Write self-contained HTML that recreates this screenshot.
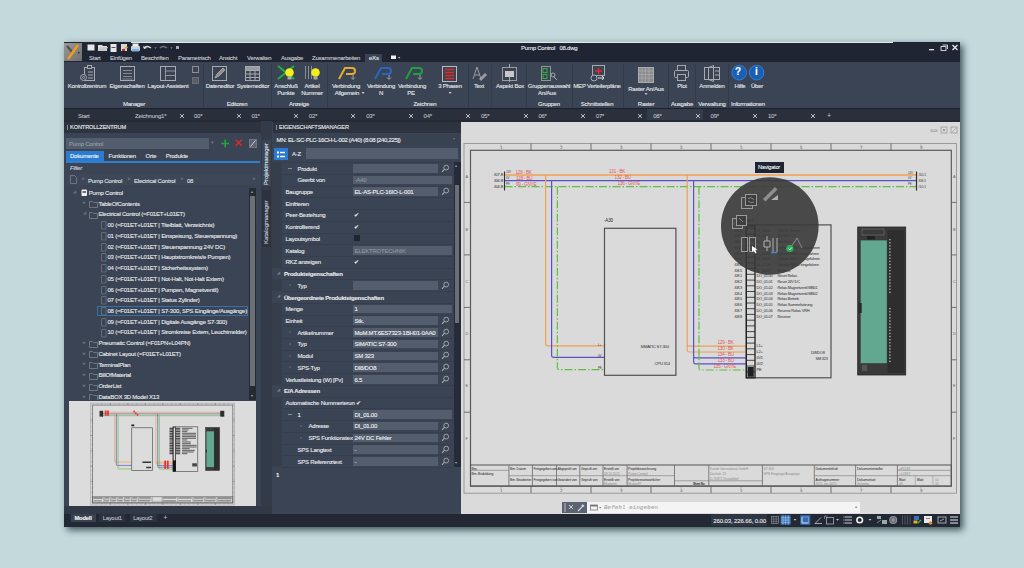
<!DOCTYPE html>
<html><head><meta charset="utf-8">
<style>
*{box-sizing:border-box}
html,body{margin:0;padding:0}
body{width:1024px;height:568px;background:#c4d9dc;position:relative;overflow:hidden;font-family:"Liberation Sans",sans-serif;color:#e3e6ea;font-size:6px;letter-spacing:-0.22px}
.a{position:absolute}
.t{position:absolute;white-space:nowrap;line-height:1;-webkit-text-stroke:0.12px currentColor}
.c{position:absolute;white-space:nowrap;line-height:1;text-align:center;width:80px;-webkit-text-stroke:0.12px currentColor}
svg{position:absolute;overflow:visible}
</style></head><body>
<div class="a" style="left:64px;top:42px;width:896px;height:484.5px;box-shadow:3px 3px 7px rgba(10,30,35,0.72);background:#3b4454"></div>
<div class="a" style="left:64px;top:42px;width:896px;height:20px;background:#1f2532"></div>
<div class="a" style="left:64px;top:62px;width:896px;height:46px;background:#3b4454"></div>
<div class="a" style="left:64px;top:108px;width:896px;height:13px;background:#29303c"></div>
<div class="a" style="left:64px;top:121px;width:197px;height:393px;background:#3b4454"></div>
<div class="a" style="left:261px;top:121px;width:11px;height:393px;background:#343c4a"></div>
<div class="a" style="left:272px;top:121px;width:189px;height:393px;background:#3b4454"></div>
<div class="a" style="left:461px;top:121px;width:499px;height:393px;background:#dadada"></div>
<div class="a" style="left:64px;top:514px;width:896px;height:12.5px;background:#232a36"></div>

<!-- logo -->
<div class="a" style="left:64px;top:43px;width:18px;height:18px;background:linear-gradient(135deg,#9a9a9a,#6e6e6e)"></div>
<svg style="left:64px;top:43px" width="18" height="18"><path d="M3 3 L9 10" stroke="#505050" stroke-width="2.2"/><path d="M14 2 L4 16" stroke="#f39a1e" stroke-width="2.6"/><rect x="14" y="9" width="1.5" height="1.5" fill="#333"/></svg>
<!-- quick access -->
<svg style="left:86px;top:43px" width="100" height="10">
<rect x="1.5" y="1.5" width="7" height="6" fill="#e8e8e8"/>
<path d="M12 2 h4 l1 1 h4 v5 h-9z" fill="#e0e0e0"/><path d="M14 4 h8 l-2 4 h-8z" fill="#c8c8c8"/>
<rect x="24.5" y="1" width="6" height="8" fill="#e8e8e8"/><rect x="25.5" y="4" width="4" height="1" fill="#555"/>
<rect x="35" y="1" width="6" height="7" fill="#d8d8d8"/><path d="M37 6 l4 -3 l1 2 z" fill="#e0a020"/><rect x="36" y="6" width="3" height="2" fill="#c03030"/>
<rect x="45" y="3" width="9" height="5" rx="1" fill="#c8d4e0"/><rect x="46.5" y="0.5" width="6" height="3" fill="#eee"/><rect x="46" y="6" width="7" height="2.5" fill="#7fb0e0"/>
<path d="M58 5 q3 -3 7 0" stroke="#ddd" stroke-width="1.4" fill="none"/><path d="M57 3 l1 3 l3 -1z" fill="#ddd"/>
<path d="M68.5 4.5 l2 0 l-1 1.2z" fill="#aaa"/>
<path d="M74 5 q3 -3 7 0" stroke="#777" stroke-width="1.4" fill="none"/>
<path d="M84.5 4.5 l2 0 l-1 1.2z" fill="#aaa"/>
<rect x="90" y="3" width="3" height="3" fill="#aaa"/>
</svg>
<div class="t" style="left:521px;top:45px;font-size:6px;color:#e8eaee">Pump Control&nbsp;&nbsp;&nbsp;08.dwg</div>
<!-- window controls -->
<svg style="left:925px;top:43px" width="35" height="12">
<rect x="4" y="6" width="5" height="1.3" fill="#e6e6e6"/>
<rect x="16" y="3.5" width="5" height="4" fill="none" stroke="#ddd" stroke-width="0.9"/><path d="M17.5 2 h5 v4" fill="none" stroke="#ddd" stroke-width="0.9"/>
<path d="M27.5 2 l5 5 M32.5 2 l-5 5" stroke="#eee" stroke-width="1.2"/>
</svg>
<!-- menu tabs -->
<div class="t" style="left:89px;top:55px;color:#c9ccd2">Start</div>
<div class="t" style="left:110px;top:55px;color:#c9ccd2">Einfügen</div>
<div class="t" style="left:141px;top:55px;color:#c9ccd2">Beschriften</div>
<div class="t" style="left:178px;top:55px;color:#c9ccd2">Parametrisch</div>
<div class="t" style="left:219px;top:55px;color:#c9ccd2">Ansicht</div>
<div class="t" style="left:247px;top:55px;color:#c9ccd2">Verwalten</div>
<div class="t" style="left:281px;top:55px;color:#c9ccd2">Ausgabe</div>
<div class="t" style="left:312px;top:55px;color:#c9ccd2">Zusammenarbeiten</div>
<div class="a" style="left:365px;top:54px;width:17px;height:8px;background:#3b4454"></div>
<div class="t" style="left:369px;top:55px;color:#e6e8ea">eXs</div>
<svg style="left:390px;top:54px" width="12" height="8"><rect x="1" y="1.5" width="5" height="3.5" fill="#f0f0f0"/><path d="M8 3 h2.4 l-1.2 1.4z" fill="#ccc"/></svg>
<div class="a" style="left:131px;top:40.5px;width:762px;height:1.5px;background:linear-gradient(#c0d4d6,#a9bfbf)"></div>
<div class="a" style="left:131px;top:42px;width:762px;height:1px;background:#e4e8ea"></div>

<!-- separators -->
<div class="a" style="left:203px;top:64px;width:1px;height:44px;background:#333b48"></div>
<div class="a" style="left:271px;top:64px;width:1px;height:44px;background:#333b48"></div>
<div class="a" style="left:327px;top:64px;width:1px;height:44px;background:#333b48"></div>
<div class="a" style="left:468px;top:64px;width:1px;height:44px;background:#333b48"></div>
<div class="a" style="left:491px;top:64px;width:1px;height:44px;background:#353d4a"></div>
<div class="a" style="left:526px;top:64px;width:1px;height:44px;background:#333b48"></div>
<div class="a" style="left:572px;top:64px;width:1px;height:44px;background:#333b48"></div>
<div class="a" style="left:623px;top:64px;width:1px;height:44px;background:#333b48"></div>
<div class="a" style="left:668px;top:64px;width:1px;height:44px;background:#333b48"></div>
<div class="a" style="left:695px;top:64px;width:1px;height:44px;background:#333b48"></div>
<div class="a" style="left:728px;top:64px;width:1px;height:44px;background:#333b48"></div>
<!-- icons -->
<svg style="left:64px;top:62px" width="900" height="24" fill="none" stroke="#a6a9ae" stroke-width="1">
<!-- Kontrollzentrum -->
<rect x="20.5" y="5.5" width="10" height="13"/><rect x="23.5" y="3.5" width="4" height="3" fill="#3b4454"/><path d="M24 10h5M24 13h5M24 16h5"/><circle cx="19.5" cy="15.5" r="3" fill="#3b4454"/><circle cx="19.5" cy="15.5" r="1"/>
<!-- Eigenschaften -->
<rect x="56.5" y="4.5" width="14" height="14"/><path d="M59 8.5h9M59 11.5h9M59 14.5h9" stroke-width="0.7"/><path d="M58.5 17h10" stroke-width="0.6"/>
<!-- Layout-Assistent -->
<rect x="96.5" y="4.5" width="15" height="14"/><path d="M101.5 4.5v14M101.5 9h10M101.5 13.5h10" stroke-width="0.8"/>
<!-- small -->
<rect x="128.5" y="4.5" width="6" height="6" stroke="#8a8e94"/><rect x="128.5" y="15.5" width="6" height="6" stroke="#6a6e74" fill="#5a5e64"/>
<!-- Dateneditor -->
<rect x="148.5" y="4.5" width="14" height="14"/><path d="M151 16l2 -4 l6 -6 l2 2 l-6 6z" fill="#8e9096" stroke="#a0a2a6"/>
<!-- Systemeditor -->
<rect x="181.5" y="4.5" width="14" height="14"/><rect x="181.5" y="4.5" width="14" height="4" fill="#9a9ca0"/><path d="M181.5 12h14M181.5 15.5h14M186 8.5v10M191 8.5v10"/>
<!-- Anschluss Punkte -->
<path d="M214 4 l16 13 M214 17 l16 -13" stroke="#22b040" stroke-width="2"/><circle cx="225.5" cy="10.5" r="4.3" fill="#f4ee1a" stroke="none"/><rect x="223.5" y="14.5" width="4" height="3" fill="#a8a8a8" stroke="none"/>
<!-- Artikel Nummer -->
<path d="M241.5 4v13M244.5 4v13M247.5 4v13" stroke="#8a8c90"/><circle cx="251.5" cy="10.5" r="4.3" fill="#f4ee1a" stroke="none"/><rect x="249.5" y="14.5" width="4" height="3" fill="#a8a8a8" stroke="none"/>
<!-- Verbindung -->
<path d="M275 17 l6 -11 h7 q3 0 3 3 q0 3 -3 3 h-6" stroke="#e5ac2c" stroke-width="2"/><path d="M289 13v4M287 15.5l2 2l2 -2" stroke="#a0a0a0"/>
<path d="M311 17 l6 -11 h7 q3 0 3 3 q0 3 -3 3 h-6" stroke="#2468c0" stroke-width="2"/><path d="M325 13v4M323 15.5l2 2l2 -2" stroke="#a0a0a0"/>
<path d="M342 17 l6 -11 h7 q3 0 3 3 q0 3 -3 3 h-6" stroke="#20a040" stroke-width="2"/><path d="M356 13v4M354 15.5l2 2l2 -2" stroke="#a0a0a0"/>
<!-- 3 Phasen -->
<rect x="378.5" y="4.5" width="14" height="15" stroke="#b8babe"/><path d="M381 7.5h9M381 10.5h9M381 13.5h9M381 16.5h9" stroke="#e02828" stroke-width="1.4"/>
<!-- Text -->
<path d="M409 17l4 -12l4 12M410.5 13h5" stroke="#9a9ca0"/><path d="M415 17l6 -6l2 2l-6 6z" fill="#9a9ca0" stroke="none"/>
<!-- Aspekt box -->
<rect x="438.5" y="5.5" width="14" height="13" stroke="#9a9ca0"/><rect x="441" y="9" width="9" height="6" fill="#c8c8c8" stroke="none"/><path d="M445.5 2v4M445.5 15v5"/>
<!-- Gruppenauswahl -->
<rect x="477.5" y="4.5" width="9" height="14" stroke="#8a9a8a"/><rect x="479" y="6.5" width="4" height="4" stroke="#30b040"/><rect x="479" y="12.5" width="4" height="4" stroke="#30b040"/><circle cx="489" cy="13" r="2"/><path d="M490 15l3 3"/>
<!-- MEP -->
<rect x="528.5" y="3.5" width="12" height="10"/><path d="M531 9h7M534.5 6v6" stroke="#e02828" stroke-width="1.6"/><circle cx="530" cy="16" r="3" fill="#3b4454"/><path d="M534 16h6M538 14l2 2l-2 2" stroke="#ddd"/>
<!-- Raster -->
<rect x="574.5" y="5.5" width="15" height="15" fill="#8a8c8e" stroke="#a8aaac"/><path d="M578 5.5v15M581.5 5.5v15M585 5.5v15M574.5 9h15M574.5 12.5h15M574.5 16h15" stroke="#b0b2b4" stroke-width="0.6"/>
<!-- Plot -->
<rect x="610.5" y="8.5" width="14" height="7" rx="1"/><rect x="613.5" y="3.5" width="8" height="5"/><rect x="613.5" y="12.5" width="8" height="6" fill="#3b4454"/>
<!-- Anmelden -->
<rect x="640.5" y="5.5" width="15" height="12"/><path d="M644.5 5.5v12l5 2v-16zM651 9h4M651 13h4"/>
<!-- Hilfe / Uber -->
<circle cx="675.2" cy="10.7" r="7.3" fill="#1a5fb4" stroke="#2f7fd8"/><circle cx="692.6" cy="10.7" r="7.3" fill="#1a5fb4" stroke="#2f7fd8"/>
</svg>
<div class="t" style="left:735px;top:67px;font-size:10px;font-weight:bold;color:#fff">?</div>
<div class="t" style="left:755px;top:67px;font-size:10px;font-weight:bold;color:#fff">i</div>
<!-- labels -->
<div class="c" style="left:47px;top:83px">Kontrollzentrum</div>
<div class="c" style="left:87px;top:83px">Eigenschaften</div>
<div class="c" style="left:128px;top:83px">Layout-Assistent</div>
<div class="c" style="left:180px;top:83px">Dateneditor</div>
<div class="c" style="left:213px;top:83px">Systemeditor</div>
<div class="c" style="left:246px;top:83px">Anschluß</div>
<div class="c" style="left:246px;top:90px">Punkte</div>
<div class="c" style="left:272px;top:83px">Artikel</div>
<div class="c" style="left:272px;top:90px">Nummer</div>
<div class="c" style="left:306px;top:83px">Verbindung</div>
<div class="c" style="left:307px;top:90px">Allgemein</div>
<div class="t" style="left:362px;top:91px;font-size:4px">▾</div>
<div class="c" style="left:341px;top:83px">Verbindung</div>
<div class="c" style="left:341px;top:90px">N</div>
<div class="c" style="left:372px;top:83px">Verbindung</div>
<div class="c" style="left:371px;top:90px">PE</div>
<div class="c" style="left:410px;top:83px">3 Phasen</div>
<div class="c" style="left:410px;top:91px;font-size:4px">▾</div>
<div class="c" style="left:439px;top:83px">Text</div>
<div class="c" style="left:470px;top:83px">Aspekt Box</div>
<div class="c" style="left:509px;top:83px">Gruppenauswahl</div>
<div class="c" style="left:507px;top:90px">An/Aus</div>
<div class="c" style="left:557px;top:83px">MEP Verteilerpläne</div>
<div class="c" style="left:606px;top:86px">Raster An/Aus</div>
<div class="c" style="left:606px;top:92px;font-size:4px">▾</div>
<div class="c" style="left:642px;top:83px">Plot</div>
<div class="c" style="left:672px;top:83px">Anmelden</div>
<div class="c" style="left:700px;top:83px">Hilfe</div>
<div class="c" style="left:717px;top:83px">Über</div>
<!-- group labels -->
<div class="c" style="left:94px;top:100.6px">Manager</div>
<div class="c" style="left:197px;top:100.6px">Editoren</div>
<div class="c" style="left:259px;top:100.6px">Anzeige</div>
<div class="c" style="left:385px;top:100.6px">Zeichnen</div>
<div class="c" style="left:509px;top:100.6px">Gruppen</div>
<div class="c" style="left:557px;top:100.6px">Schnittstellen</div>
<div class="c" style="left:606px;top:100.6px">Raster</div>
<div class="c" style="left:642px;top:100.6px">Ausgabe</div>
<div class="c" style="left:672px;top:100.6px">Verwaltung</div>
<div class="c" style="left:708px;top:100.6px">Informationen</div>

<div class="a" style="left:64px;top:108px;width:896px;height:1px;background:#1c222c"></div>
<div class="a" style="left:64px;top:120.4px;width:896px;height:1.8px;background:#252b36"></div>
<div class="t" style="left:78px;top:113px;color:#b8bcc2">Start</div>
<div class="t" style="left:135px;top:113px;color:#b8bcc2">Zeichnung1*</div>
<svg style="left:179px;top:113px" width="6" height="6"><path d="M1 1l4 4M5 1l-4 4" stroke="#c8ccd2" stroke-width="0.9"/></svg>
<div class="t" style="left:194.0px;top:113px;color:#b8bcc2">00*</div>
<svg style="left:235.5px;top:113px" width="6" height="6"><path d="M1 1l4 4M5 1l-4 4" stroke="#c8ccd2" stroke-width="0.9"/></svg>
<div class="t" style="left:251.4px;top:113px;color:#b8bcc2">01*</div>
<svg style="left:292.9px;top:113px" width="6" height="6"><path d="M1 1l4 4M5 1l-4 4" stroke="#c8ccd2" stroke-width="0.9"/></svg>
<div class="t" style="left:308.8px;top:113px;color:#b8bcc2">02*</div>
<svg style="left:350.3px;top:113px" width="6" height="6"><path d="M1 1l4 4M5 1l-4 4" stroke="#c8ccd2" stroke-width="0.9"/></svg>
<div class="t" style="left:366.2px;top:113px;color:#b8bcc2">03*</div>
<svg style="left:407.7px;top:113px" width="6" height="6"><path d="M1 1l4 4M5 1l-4 4" stroke="#c8ccd2" stroke-width="0.9"/></svg>
<div class="t" style="left:423.6px;top:113px;color:#b8bcc2">04*</div>
<svg style="left:465.1px;top:113px" width="6" height="6"><path d="M1 1l4 4M5 1l-4 4" stroke="#c8ccd2" stroke-width="0.9"/></svg>
<div class="t" style="left:481.0px;top:113px;color:#b8bcc2">05*</div>
<svg style="left:522.5px;top:113px" width="6" height="6"><path d="M1 1l4 4M5 1l-4 4" stroke="#c8ccd2" stroke-width="0.9"/></svg>
<div class="t" style="left:538.4px;top:113px;color:#b8bcc2">06*</div>
<svg style="left:579.9px;top:113px" width="6" height="6"><path d="M1 1l4 4M5 1l-4 4" stroke="#c8ccd2" stroke-width="0.9"/></svg>
<div class="t" style="left:595.8px;top:113px;color:#b8bcc2">07*</div>
<svg style="left:637.3px;top:113px" width="6" height="6"><path d="M1 1l4 4M5 1l-4 4" stroke="#c8ccd2" stroke-width="0.9"/></svg>
<div class="a" style="left:647.2px;top:109px;width:56px;height:11px;background:#343c49"></div>
<div class="t" style="left:653.2px;top:113px;color:#b8bcc2">08*</div>
<svg style="left:694.7px;top:113px" width="6" height="6"><path d="M1 1l4 4M5 1l-4 4" stroke="#c8ccd2" stroke-width="0.9"/></svg>
<div class="t" style="left:710.6px;top:113px;color:#b8bcc2">09*</div>
<svg style="left:752.1px;top:113px" width="6" height="6"><path d="M1 1l4 4M5 1l-4 4" stroke="#c8ccd2" stroke-width="0.9"/></svg>
<div class="t" style="left:768.0px;top:113px;color:#b8bcc2">10*</div>
<svg style="left:809.5px;top:113px" width="6" height="6"><path d="M1 1l4 4M5 1l-4 4" stroke="#c8ccd2" stroke-width="0.9"/></svg>
<div class="t" style="left:827px;top:112px;color:#b8bcc2;font-size:7px">+</div>
<div class="a" style="left:64px;top:122px;width:197px;height:11px;background:#2d3440"></div>
<div class="a" style="left:67px;top:125px;width:1px;height:5px;background:#8a9098"></div>
<div class="t" style="left:70px;top:125px;color:#e8eaee;font-size:5.6px;letter-spacing:-0.1px">KONTROLLZENTRUM</div>
<div class="a" style="left:66px;top:138px;width:143px;height:11px;background:#535d6e"></div>
<div class="t" style="left:69px;top:141px;color:#949aa4">Pump Control</div>
<div class="t" style="left:211px;top:140px;color:#7a808a;font-size:5px">▾</div>
<svg style="left:219px;top:138px" width="42" height="11"><path d="M6.2 1.5v8M2.2 5.5h8" stroke="#1fa83a" stroke-width="1.5"/><path d="M16.7 1.8l6 6M22.7 1.8l-6 6" stroke="#d92a2a" stroke-width="1.6"/><rect x="30.5" y="1.5" width="7" height="8" fill="#5c6270" stroke="#70767e"/><path d="M31.5 8.5l5 -6" stroke="#d0d0d0" stroke-width="1"/></svg>
<div class="a" style="left:66px;top:151px;width:38px;height:10px;background:#2b7bd0"></div>
<div class="a" style="left:66px;top:161px;width:194px;height:1.5px;background:#2d7fd0"></div>
<div class="t" style="left:70px;top:153px;color:#f2f4f6">Dokumente</div>
<div class="t" style="left:108.5px;top:153px;color:#e6e8ea">Funktionen</div>
<div class="t" style="left:145.5px;top:153px;color:#e6e8ea">Orte</div>
<div class="t" style="left:165.7px;top:153px;color:#e6e8ea">Produkte</div>
<div class="t" style="left:70px;top:165px;color:#d0d4da;font-style:italic">Filter</div>
<div class="a" style="left:66px;top:174px;width:194px;height:11px;background:#3e4757"></div>
<svg style="left:70px;top:175px" width="8" height="9"><path d="M0.5 0.5h4l2 2v6h-6z" fill="none" stroke="#7a808a" stroke-width="0.8"/></svg>
<div class="t" style="left:82px;top:177px;color:#6a7078;font-size:4.5px">▸</div>
<div class="t" style="left:128px;top:177px;color:#6a7078;font-size:4.5px">▸</div>
<div class="t" style="left:181px;top:177px;color:#6a7078;font-size:4.5px">▸</div>
<div class="t" style="left:88px;top:177.5px;color:#dde0e4">Pump Control</div>
<div class="t" style="left:134px;top:177.5px;color:#dde0e4">Electrical Control</div>
<div class="t" style="left:187px;top:177.5px;color:#dde0e4">08</div>
<div class="t" style="left:253px;top:177px;color:#6a7078;font-size:4.5px">▸</div>
<div class="a" style="left:64px;top:187px;width:184px;height:213px;overflow:hidden">
<div class="a" style="left:-64px;top:-187px;width:400px;height:600px"><div class="t" style="left:73px;top:190.5px;color:#6e747c;font-size:3.5px">◢</div>
<svg style="left:81px;top:189.2px" width="7" height="8"><rect x="0.5" y="0.5" width="5.5" height="6.5" rx="1" fill="#f0f0f0"/><rect x="1.5" y="2" width="3.5" height="2" fill="#707070"/></svg>
<div class="t" style="left:88.8px;top:189.8px;color:#e6e8ec">Pump Control</div>
<div class="t" style="left:82.5px;top:201.2px;color:#6e747c;font-size:4.5px">▸</div>
<svg style="left:89.4px;top:199.9px" width="9" height="8"><path d="M0.5 1.5h3l1 1h4v5h-8z" fill="none" stroke="#7c8088" stroke-width="0.8"/></svg>
<div class="t" style="left:98.4px;top:200.5px;color:#e6e8ec">TableOfContents</div>
<div class="t" style="left:82.5px;top:212.0px;color:#6e747c;font-size:3.5px">◢</div>
<svg style="left:89.4px;top:210.7px" width="9" height="8"><path d="M0.5 1.5h3l1 1h4v5h-8z" fill="none" stroke="#7c8088" stroke-width="0.8"/></svg>
<div class="t" style="left:98.4px;top:211.3px;color:#e6e8ec">Electrical Control (=F01ET+L01ET)</div>
<svg style="left:101px;top:221.1px" width="7" height="9"><path d="M0.5 0.5h4.5v7.5h-4.5z" fill="none" stroke="#70757e" stroke-width="0.8"/></svg>
<div class="t" style="left:107.5px;top:222.0px;color:#e6e8ec">00 (=F01ET+L01ET | Titelblatt, Verzeichnis)</div>
<svg style="left:101px;top:231.9px" width="7" height="9"><path d="M0.5 0.5h4.5v7.5h-4.5z" fill="none" stroke="#70757e" stroke-width="0.8"/></svg>
<div class="t" style="left:107.5px;top:232.8px;color:#e6e8ec">01 (=F01ET+L01ET | Einspeisung, Steuerspannung)</div>
<svg style="left:101px;top:242.6px" width="7" height="9"><path d="M0.5 0.5h4.5v7.5h-4.5z" fill="none" stroke="#70757e" stroke-width="0.8"/></svg>
<div class="t" style="left:107.5px;top:243.5px;color:#e6e8ec">02 (=F01ET+L01ET | Steuerspannung 24V DC)</div>
<svg style="left:101px;top:253.3px" width="7" height="9"><path d="M0.5 0.5h4.5v7.5h-4.5z" fill="none" stroke="#70757e" stroke-width="0.8"/></svg>
<div class="t" style="left:107.5px;top:254.2px;color:#e6e8ec">03 (=F01ET+L01ET | Hauptstromkreis/e Pumpen)</div>
<svg style="left:101px;top:264.1px" width="7" height="9"><path d="M0.5 0.5h4.5v7.5h-4.5z" fill="none" stroke="#70757e" stroke-width="0.8"/></svg>
<div class="t" style="left:107.5px;top:265.0px;color:#e6e8ec">04 (=F01ET+L01ET | Sicherheitssystem)</div>
<svg style="left:101px;top:274.8px" width="7" height="9"><path d="M0.5 0.5h4.5v7.5h-4.5z" fill="none" stroke="#70757e" stroke-width="0.8"/></svg>
<div class="t" style="left:107.5px;top:275.7px;color:#e6e8ec">05 (=F01ET+L01ET | Not-Halt, Not-Halt Extern)</div>
<svg style="left:101px;top:285.6px" width="7" height="9"><path d="M0.5 0.5h4.5v7.5h-4.5z" fill="none" stroke="#70757e" stroke-width="0.8"/></svg>
<div class="t" style="left:107.5px;top:286.5px;color:#e6e8ec">06 (=F01ET+L01ET | Pumpen, Magnetventil)</div>
<svg style="left:101px;top:296.3px" width="7" height="9"><path d="M0.5 0.5h4.5v7.5h-4.5z" fill="none" stroke="#70757e" stroke-width="0.8"/></svg>
<div class="t" style="left:107.5px;top:297.2px;color:#e6e8ec">07 (=F01ET+L01ET | Status Zylinder)</div>
<div class="a" style="left:97px;top:305.6px;width:151px;height:10.4px;border:1px solid #3a6ea8;background:#3a4556"></div>
<svg style="left:101px;top:307.0px" width="7" height="9"><path d="M0.5 0.5h4.5v7.5h-4.5z" fill="none" stroke="#70757e" stroke-width="0.8"/></svg>
<div class="t" style="left:107.5px;top:307.9px;color:#e6e8ec">08 (=F01ET+L01ET | S7-300, SPS Eingänge/Ausgänge)</div>
<svg style="left:101px;top:317.8px" width="7" height="9"><path d="M0.5 0.5h4.5v7.5h-4.5z" fill="none" stroke="#70757e" stroke-width="0.8"/></svg>
<div class="t" style="left:107.5px;top:318.7px;color:#e6e8ec">09 (=F01ET+L01ET | Digitale Ausgänge S7-300)</div>
<svg style="left:101px;top:328.5px" width="7" height="9"><path d="M0.5 0.5h4.5v7.5h-4.5z" fill="none" stroke="#70757e" stroke-width="0.8"/></svg>
<div class="t" style="left:107.5px;top:329.4px;color:#e6e8ec">10 (=F01ET+L01ET | Stromkreise Extern, Leuchtmelder)</div>
<div class="t" style="left:82.5px;top:340.9px;color:#6e747c;font-size:4.5px">▸</div>
<svg style="left:89.4px;top:339.6px" width="9" height="8"><path d="M0.5 1.5h3l1 1h4v5h-8z" fill="none" stroke="#7c8088" stroke-width="0.8"/></svg>
<div class="t" style="left:98.4px;top:340.2px;color:#e6e8ec">Pneumatic Control (=F01PN+L04PN)</div>
<div class="t" style="left:82.5px;top:351.6px;color:#6e747c;font-size:4.5px">▸</div>
<svg style="left:89.4px;top:350.3px" width="9" height="8"><path d="M0.5 1.5h3l1 1h4v5h-8z" fill="none" stroke="#7c8088" stroke-width="0.8"/></svg>
<div class="t" style="left:98.4px;top:350.9px;color:#e6e8ec">Cabinet Layout (=F01ET+L01ET)</div>
<div class="t" style="left:82.5px;top:362.3px;color:#6e747c;font-size:4.5px">▸</div>
<svg style="left:89.4px;top:361.0px" width="9" height="8"><path d="M0.5 1.5h3l1 1h4v5h-8z" fill="none" stroke="#7c8088" stroke-width="0.8"/></svg>
<div class="t" style="left:98.4px;top:361.6px;color:#e6e8ec">TerminalPlan</div>
<div class="t" style="left:82.5px;top:373.1px;color:#6e747c;font-size:4.5px">▸</div>
<svg style="left:89.4px;top:371.8px" width="9" height="8"><path d="M0.5 1.5h3l1 1h4v5h-8z" fill="none" stroke="#7c8088" stroke-width="0.8"/></svg>
<div class="t" style="left:98.4px;top:372.4px;color:#e6e8ec">BillOfMaterial</div>
<div class="t" style="left:82.5px;top:383.8px;color:#6e747c;font-size:4.5px">▸</div>
<svg style="left:89.4px;top:382.5px" width="9" height="8"><path d="M0.5 1.5h3l1 1h4v5h-8z" fill="none" stroke="#7c8088" stroke-width="0.8"/></svg>
<div class="t" style="left:98.4px;top:383.1px;color:#e6e8ec">OrderList</div>
<div class="t" style="left:82.5px;top:394.6px;color:#6e747c;font-size:4.5px">▸</div>
<svg style="left:89.4px;top:393.3px" width="9" height="8"><path d="M0.5 1.5h3l1 1h4v5h-8z" fill="none" stroke="#7c8088" stroke-width="0.8"/></svg>
<div class="t" style="left:98.4px;top:393.9px;color:#e6e8ec">DataBOX 3D Model X13</div></div></div>
<div class="a" style="left:249px;top:188px;width:7px;height:212px;background:#252b35"></div>
<div class="a" style="left:250px;top:195.5px;width:5px;height:190px;background:#6c7076"></div>
<div class="t" style="left:250.5px;top:189.5px;color:#9a9ea4;font-size:4px">▴</div>
<div class="t" style="left:250.5px;top:393.5px;color:#9a9ea4;font-size:4px">▾</div>
<div class="a" style="left:64px;top:400px;width:197px;height:112px;background:#3b4454"></div>
<div class="a" style="left:68.5px;top:401.2px;width:187.3px;height:104.7px;background:#dcdcdc;overflow:hidden">
<svg style="left:0;top:0" width="188" height="105"><g transform="translate(-113.46,-39.76) scale(0.2915)"><rect x="464" y="143.6" width="492.5" height="349.6" fill="none" stroke="#8a8a8a" stroke-width="1.52"/>
<rect x="470.5" y="150.3" width="480.8" height="335.8" fill="none" stroke="#5a5a5a" stroke-width="2.28"/>
<path d="M531 143.6v6.7M531 486v7.2" stroke="#707070" stroke-width="1.90"/>
<path d="M591 143.6v6.7M591 486v7.2" stroke="#707070" stroke-width="1.90"/>
<path d="M651 143.6v6.7M651 486v7.2" stroke="#707070" stroke-width="1.90"/>
<path d="M711 143.6v6.7M711 486v7.2" stroke="#707070" stroke-width="1.90"/>
<path d="M771 143.6v6.7M771 486v7.2" stroke="#707070" stroke-width="1.90"/>
<path d="M831 143.6v6.7M831 486v7.2" stroke="#707070" stroke-width="1.90"/>
<path d="M891 143.6v6.7M891 486v7.2" stroke="#707070" stroke-width="1.90"/>
<path d="M501 144.5v2.5M501 487v2.5" stroke="#909090" stroke-width="0.95"/>
<path d="M561 144.5v2.5M561 487v2.5" stroke="#909090" stroke-width="0.95"/>
<path d="M621 144.5v2.5M621 487v2.5" stroke="#909090" stroke-width="0.95"/>
<path d="M681 144.5v2.5M681 487v2.5" stroke="#909090" stroke-width="0.95"/>
<path d="M741 144.5v2.5M741 487v2.5" stroke="#909090" stroke-width="0.95"/>
<path d="M801 144.5v2.5M801 487v2.5" stroke="#909090" stroke-width="0.95"/>
<path d="M861 144.5v2.5M861 487v2.5" stroke="#909090" stroke-width="0.95"/>
<path d="M921 144.5v2.5M921 487v2.5" stroke="#909090" stroke-width="0.95"/>
<path d="M471 144v5.5M471 487v5.5" stroke="#8a8a8a" stroke-width="0.95"/>
<path d="M486 144v5.5M486 487v5.5" stroke="#8a8a8a" stroke-width="0.95"/>
<path d="M501 144v5.5M501 487v5.5" stroke="#8a8a8a" stroke-width="0.95"/>
<path d="M516 144v5.5M516 487v5.5" stroke="#8a8a8a" stroke-width="0.95"/>
<path d="M531 144v5.5M531 487v5.5" stroke="#8a8a8a" stroke-width="0.95"/>
<path d="M546 144v5.5M546 487v5.5" stroke="#8a8a8a" stroke-width="0.95"/>
<path d="M561 144v5.5M561 487v5.5" stroke="#8a8a8a" stroke-width="0.95"/>
<path d="M576 144v5.5M576 487v5.5" stroke="#8a8a8a" stroke-width="0.95"/>
<path d="M591 144v5.5M591 487v5.5" stroke="#8a8a8a" stroke-width="0.95"/>
<path d="M606 144v5.5M606 487v5.5" stroke="#8a8a8a" stroke-width="0.95"/>
<path d="M621 144v5.5M621 487v5.5" stroke="#8a8a8a" stroke-width="0.95"/>
<path d="M636 144v5.5M636 487v5.5" stroke="#8a8a8a" stroke-width="0.95"/>
<path d="M651 144v5.5M651 487v5.5" stroke="#8a8a8a" stroke-width="0.95"/>
<path d="M666 144v5.5M666 487v5.5" stroke="#8a8a8a" stroke-width="0.95"/>
<path d="M681 144v5.5M681 487v5.5" stroke="#8a8a8a" stroke-width="0.95"/>
<path d="M696 144v5.5M696 487v5.5" stroke="#8a8a8a" stroke-width="0.95"/>
<path d="M711 144v5.5M711 487v5.5" stroke="#8a8a8a" stroke-width="0.95"/>
<path d="M726 144v5.5M726 487v5.5" stroke="#8a8a8a" stroke-width="0.95"/>
<path d="M741 144v5.5M741 487v5.5" stroke="#8a8a8a" stroke-width="0.95"/>
<path d="M756 144v5.5M756 487v5.5" stroke="#8a8a8a" stroke-width="0.95"/>
<path d="M771 144v5.5M771 487v5.5" stroke="#8a8a8a" stroke-width="0.95"/>
<path d="M786 144v5.5M786 487v5.5" stroke="#8a8a8a" stroke-width="0.95"/>
<path d="M801 144v5.5M801 487v5.5" stroke="#8a8a8a" stroke-width="0.95"/>
<path d="M816 144v5.5M816 487v5.5" stroke="#8a8a8a" stroke-width="0.95"/>
<path d="M831 144v5.5M831 487v5.5" stroke="#8a8a8a" stroke-width="0.95"/>
<path d="M846 144v5.5M846 487v5.5" stroke="#8a8a8a" stroke-width="0.95"/>
<path d="M861 144v5.5M861 487v5.5" stroke="#8a8a8a" stroke-width="0.95"/>
<path d="M876 144v5.5M876 487v5.5" stroke="#8a8a8a" stroke-width="0.95"/>
<path d="M891 144v5.5M891 487v5.5" stroke="#8a8a8a" stroke-width="0.95"/>
<path d="M906 144v5.5M906 487v5.5" stroke="#8a8a8a" stroke-width="0.95"/>
<path d="M921 144v5.5M921 487v5.5" stroke="#8a8a8a" stroke-width="0.95"/>
<path d="M936 144v5.5M936 487v5.5" stroke="#8a8a8a" stroke-width="0.95"/>
<path d="M951 144v5.5M951 487v5.5" stroke="#8a8a8a" stroke-width="0.95"/>
<path d="M464.5 150h5.5M951.5 150h5" stroke="#8a8a8a" stroke-width="0.95"/>
<path d="M464.5 165h5.5M951.5 165h5" stroke="#8a8a8a" stroke-width="0.95"/>
<path d="M464.5 180h5.5M951.5 180h5" stroke="#8a8a8a" stroke-width="0.95"/>
<path d="M464.5 195h5.5M951.5 195h5" stroke="#8a8a8a" stroke-width="0.95"/>
<path d="M464.5 210h5.5M951.5 210h5" stroke="#8a8a8a" stroke-width="0.95"/>
<path d="M464.5 225h5.5M951.5 225h5" stroke="#8a8a8a" stroke-width="0.95"/>
<path d="M464.5 240h5.5M951.5 240h5" stroke="#8a8a8a" stroke-width="0.95"/>
<path d="M464.5 255h5.5M951.5 255h5" stroke="#8a8a8a" stroke-width="0.95"/>
<path d="M464.5 270h5.5M951.5 270h5" stroke="#8a8a8a" stroke-width="0.95"/>
<path d="M464.5 285h5.5M951.5 285h5" stroke="#8a8a8a" stroke-width="0.95"/>
<path d="M464.5 300h5.5M951.5 300h5" stroke="#8a8a8a" stroke-width="0.95"/>
<path d="M464.5 315h5.5M951.5 315h5" stroke="#8a8a8a" stroke-width="0.95"/>
<path d="M464.5 330h5.5M951.5 330h5" stroke="#8a8a8a" stroke-width="0.95"/>
<path d="M464.5 345h5.5M951.5 345h5" stroke="#8a8a8a" stroke-width="0.95"/>
<path d="M464.5 360h5.5M951.5 360h5" stroke="#8a8a8a" stroke-width="0.95"/>
<path d="M464.5 375h5.5M951.5 375h5" stroke="#8a8a8a" stroke-width="0.95"/>
<path d="M464.5 390h5.5M951.5 390h5" stroke="#8a8a8a" stroke-width="0.95"/>
<path d="M464.5 405h5.5M951.5 405h5" stroke="#8a8a8a" stroke-width="0.95"/>
<path d="M464.5 420h5.5M951.5 420h5" stroke="#8a8a8a" stroke-width="0.95"/>
<path d="M464.5 435h5.5M951.5 435h5" stroke="#8a8a8a" stroke-width="0.95"/>
<path d="M464.5 450h5.5M951.5 450h5" stroke="#8a8a8a" stroke-width="0.95"/>
<path d="M464.5 465h5.5M951.5 465h5" stroke="#8a8a8a" stroke-width="0.95"/>
<path d="M464.5 480h5.5M951.5 480h5" stroke="#8a8a8a" stroke-width="0.95"/>
<path d="M464 202.4h6.5M951.3 202.4h5.2" stroke="#707070" stroke-width="1.90"/>
<path d="M464 254.9h6.5M951.3 254.9h5.2" stroke="#707070" stroke-width="1.90"/>
<path d="M464 307.4h6.5M951.3 307.4h5.2" stroke="#707070" stroke-width="1.90"/>
<path d="M464 359.8h6.5M951.3 359.8h5.2" stroke="#707070" stroke-width="1.90"/>
<path d="M464 412.2h6.5M951.3 412.2h5.2" stroke="#707070" stroke-width="1.90"/>
<path d="M504.5 175H916.5" stroke="#f0a050" stroke-width="2.47"/>
<path d="M504.5 180.6H916.5" stroke="#5a50c8" stroke-width="2.28"/>
<path d="M504.5 186.7H916.5" stroke="#60c040" stroke-width="2.28"/>
<path d="M545.6 175V344q0 1.8 1.8 1.8H604.5" fill="none" stroke="#f0a050" stroke-width="2.28"/>
<path d="M551.6 180.6V355.6q0 1.8 1.8 1.8H604.5" fill="none" stroke="#5a50c8" stroke-width="2.28"/>
<path d="M557.4 186.7V367.8q0 1.8 1.8 1.8H604.5" fill="none" stroke="#60c040" stroke-width="2.28"/>
<path d="M687.2 175V344.3q0 1.8 1.8 1.8H746.5M687.2 345V350.2q0 1.8 1.8 1.8H746.5" fill="none" stroke="#f0a050" stroke-width="2.28"/>
<path d="M693.6 180.6V356.1q0 1.8 1.8 1.8H746.5M693.6 357V362q0 1.8 1.8 1.8H746.5" fill="none" stroke="#5a50c8" stroke-width="2.28"/>
<path d="M699 186.7V368.2q0 1.8 1.8 1.8H746.5" fill="none" stroke="#60c040" stroke-width="2.28"/>
<path d="M504.5 171.5v19" stroke="#303030" stroke-width="2.09"/>
<path d="M916.5 171.5v19" stroke="#303030" stroke-width="2.28"/>
<rect x="604.5" y="228.3" width="71.4" height="147" fill="none" stroke="#505050" stroke-width="2.28"/>
<rect x="746.3" y="224.9" width="84.7" height="152.9" fill="none" stroke="#505050" stroke-width="2.28"/>
<rect x="746.3" y="226" width="8.7" height="151.8" fill="none" stroke="#202020" stroke-width="2.47"/>
<rect x="857.7" y="227" width="48" height="148" fill="#3a3a3a" stroke="#262626" stroke-width="1.52"/>
<rect x="860.7" y="240.4" width="26.1" height="122.8" fill="#62a890"/>
<rect x="887.5" y="230" width="17" height="143" fill="#2e2e2e"/>
<rect x="858.7" y="303" width="3" height="10" fill="#2a2a2a"/>
<rect x="470.5" y="465" width="480.8" height="21.1" fill="none" stroke="#555" stroke-width="1.90"/>
<path d="M508.9 465v21.1" stroke="#666" stroke-width="1.52"/>
<path d="M532.4 465v21.1" stroke="#666" stroke-width="1.52"/>
<path d="M556.5 465v21.1" stroke="#666" stroke-width="1.52"/>
<path d="M579.8 465v21.1" stroke="#666" stroke-width="1.52"/>
<path d="M603 465v21.1" stroke="#666" stroke-width="1.52"/>
<path d="M627.1 465v21.1" stroke="#666" stroke-width="1.52"/>
<path d="M674.5 465v21.1" stroke="#666" stroke-width="1.52"/>
<path d="M708.8 465v21.1" stroke="#666" stroke-width="1.52"/>
<path d="M762.4 465v21.1" stroke="#666" stroke-width="1.52"/>
<path d="M814.3 465v21.1" stroke="#666" stroke-width="1.52"/>
<path d="M855.6 465v21.1" stroke="#666" stroke-width="1.52"/>
<path d="M897.4 465v21.1" stroke="#666" stroke-width="1.52"/>
<path d="M470.5 470.3h38.4M508.9 475.7h118.2M627.1 475.7h47.4M674.5 480.8h88M814.3 475.7h83.1M897.4 470.3h54M897.4 475.7h54" stroke="#777" stroke-width="1.14"/>
<path d="M915.3 475.7v10.4M932.9 475.7v10.4" stroke="#888" stroke-width="0.95"/>
<rect x="734" y="228.2" width="12" height="3.6" fill="#202020" fill-opacity="0.9"/>
<rect x="756" y="228.2" width="15" height="3.6" fill="#202020" fill-opacity="0.85"/>
<rect x="777" y="228.2" width="36" height="3.6" fill="#303030" fill-opacity="0.7"/>
<rect x="734" y="233.9" width="12" height="3.6" fill="#202020" fill-opacity="0.9"/>
<rect x="756" y="233.9" width="15" height="3.6" fill="#202020" fill-opacity="0.85"/>
<rect x="777" y="233.9" width="22" height="3.6" fill="#303030" fill-opacity="0.7"/>
<rect x="734" y="239.7" width="12" height="3.6" fill="#202020" fill-opacity="0.9"/>
<rect x="756" y="239.7" width="15" height="3.6" fill="#202020" fill-opacity="0.85"/>
<rect x="777" y="239.7" width="18" height="3.6" fill="#303030" fill-opacity="0.7"/>
<rect x="734" y="245.4" width="12" height="3.6" fill="#202020" fill-opacity="0.9"/>
<rect x="756" y="245.4" width="15" height="3.6" fill="#202020" fill-opacity="0.85"/>
<rect x="777" y="245.4" width="48" height="3.6" fill="#303030" fill-opacity="0.7"/>
<rect x="734" y="251.1" width="12" height="3.6" fill="#202020" fill-opacity="0.9"/>
<rect x="756" y="251.1" width="15" height="3.6" fill="#202020" fill-opacity="0.85"/>
<rect x="777" y="251.1" width="48" height="3.6" fill="#303030" fill-opacity="0.7"/>
<rect x="734" y="256.8" width="12" height="3.6" fill="#202020" fill-opacity="0.9"/>
<rect x="756" y="256.8" width="15" height="3.6" fill="#202020" fill-opacity="0.85"/>
<rect x="777" y="256.8" width="48" height="3.6" fill="#303030" fill-opacity="0.7"/>
<rect x="734" y="262.6" width="12" height="3.6" fill="#202020" fill-opacity="0.9"/>
<rect x="756" y="262.6" width="15" height="3.6" fill="#202020" fill-opacity="0.85"/>
<rect x="777" y="262.6" width="48" height="3.6" fill="#303030" fill-opacity="0.7"/>
<rect x="734" y="268.3" width="12" height="3.6" fill="#202020" fill-opacity="0.9"/>
<rect x="756" y="268.3" width="15" height="3.6" fill="#202020" fill-opacity="0.85"/>
<rect x="777" y="268.3" width="18" height="3.6" fill="#303030" fill-opacity="0.7"/>
<rect x="734" y="275.2" width="12" height="3.6" fill="#202020" fill-opacity="0.9"/>
<rect x="756" y="275.2" width="15" height="3.6" fill="#202020" fill-opacity="0.85"/>
<rect x="777" y="275.2" width="30" height="3.6" fill="#303030" fill-opacity="0.7"/>
<rect x="734" y="281.0" width="12" height="3.6" fill="#202020" fill-opacity="0.9"/>
<rect x="756" y="281.0" width="15" height="3.6" fill="#202020" fill-opacity="0.85"/>
<rect x="777" y="281.0" width="30" height="3.6" fill="#303030" fill-opacity="0.7"/>
<rect x="734" y="286.7" width="12" height="3.6" fill="#202020" fill-opacity="0.9"/>
<rect x="756" y="286.7" width="15" height="3.6" fill="#202020" fill-opacity="0.85"/>
<rect x="777" y="286.7" width="50" height="3.6" fill="#303030" fill-opacity="0.7"/>
<rect x="734" y="292.4" width="12" height="3.6" fill="#202020" fill-opacity="0.9"/>
<rect x="756" y="292.4" width="15" height="3.6" fill="#202020" fill-opacity="0.85"/>
<rect x="777" y="292.4" width="50" height="3.6" fill="#303030" fill-opacity="0.7"/>
<rect x="734" y="298.2" width="12" height="3.6" fill="#202020" fill-opacity="0.9"/>
<rect x="756" y="298.2" width="15" height="3.6" fill="#202020" fill-opacity="0.85"/>
<rect x="777" y="298.2" width="26" height="3.6" fill="#303030" fill-opacity="0.7"/>
<rect x="734" y="303.9" width="12" height="3.6" fill="#202020" fill-opacity="0.9"/>
<rect x="756" y="303.9" width="15" height="3.6" fill="#202020" fill-opacity="0.85"/>
<rect x="777" y="303.9" width="44" height="3.6" fill="#303030" fill-opacity="0.7"/>
<rect x="734" y="309.6" width="12" height="3.6" fill="#202020" fill-opacity="0.9"/>
<rect x="756" y="309.6" width="15" height="3.6" fill="#202020" fill-opacity="0.85"/>
<rect x="777" y="309.6" width="40" height="3.6" fill="#303030" fill-opacity="0.7"/>
<rect x="734" y="315.3" width="12" height="3.6" fill="#202020" fill-opacity="0.9"/>
<rect x="756" y="315.3" width="15" height="3.6" fill="#202020" fill-opacity="0.85"/>
<rect x="777" y="315.3" width="18" height="3.6" fill="#303030" fill-opacity="0.7"/>
<rect x="716" y="341" width="6" height="28" fill="#e83030"/><rect x="725" y="341" width="6" height="28" fill="#e83030"/>
<rect x="746" y="340" width="10" height="37" fill="#151515"/>
<rect x="812" y="350" width="16" height="11" fill="#202020" fill-opacity="0.8"/>
<rect x="641" y="344" width="30" height="5" fill="#202020" fill-opacity="0.9"/>
<rect x="654" y="362" width="17" height="5" fill="#202020" fill-opacity="0.9"/>
<rect x="494" y="170" width="12" height="20" fill="#202020" fill-opacity="0.9"/>
<rect x="512" y="169" width="6" height="18" fill="#e83030"/><rect x="520" y="169" width="6" height="18" fill="#e83030"/>
<rect x="610" y="169" width="5" height="7" fill="#e83030"/><rect x="616" y="175" width="5" height="7" fill="#e83030"/><rect x="622" y="181" width="5" height="6" fill="#e83030"/>
<rect x="908" y="170" width="14" height="20" fill="#202020" fill-opacity="0.9"/>
<rect x="603" y="217" width="10" height="6" fill="#202020"/>
<rect x="473" y="467" width="31" height="4" fill="#303030" fill-opacity="0.6"/>
<rect x="473" y="477" width="29" height="4" fill="#303030" fill-opacity="0.5"/>
<rect x="511" y="467" width="17" height="4" fill="#303030" fill-opacity="0.6"/>
<rect x="511" y="477" width="15" height="4" fill="#303030" fill-opacity="0.5"/>
<rect x="535" y="467" width="17" height="4" fill="#303030" fill-opacity="0.6"/>
<rect x="535" y="477" width="15" height="4" fill="#303030" fill-opacity="0.5"/>
<rect x="559" y="467" width="16" height="4" fill="#303030" fill-opacity="0.6"/>
<rect x="559" y="477" width="14" height="4" fill="#303030" fill-opacity="0.5"/>
<rect x="582" y="467" width="17" height="4" fill="#303030" fill-opacity="0.6"/>
<rect x="582" y="477" width="15" height="4" fill="#303030" fill-opacity="0.5"/>
<rect x="606" y="467" width="17" height="4" fill="#303030" fill-opacity="0.6"/>
<rect x="606" y="477" width="15" height="4" fill="#303030" fill-opacity="0.5"/>
<rect x="630" y="467" width="40" height="4" fill="#303030" fill-opacity="0.6"/>
<rect x="630" y="477" width="38" height="4" fill="#303030" fill-opacity="0.5"/>
<rect x="711" y="467" width="47" height="4" fill="#303030" fill-opacity="0.6"/>
<rect x="711" y="477" width="45" height="4" fill="#303030" fill-opacity="0.5"/>
<rect x="765" y="467" width="45" height="4" fill="#303030" fill-opacity="0.6"/>
<rect x="765" y="477" width="43" height="4" fill="#303030" fill-opacity="0.5"/>
<rect x="817" y="467" width="34" height="4" fill="#303030" fill-opacity="0.6"/>
<rect x="817" y="477" width="32" height="4" fill="#303030" fill-opacity="0.5"/>
<rect x="858" y="467" width="35" height="4" fill="#303030" fill-opacity="0.6"/>
<rect x="858" y="477" width="33" height="4" fill="#303030" fill-opacity="0.5"/>
<rect x="900" y="467" width="47" height="4" fill="#303030" fill-opacity="0.6"/>
<rect x="900" y="477" width="45" height="4" fill="#303030" fill-opacity="0.5"/></g></svg>
</div>
<div class="a" style="left:273px;top:122px;width:188px;height:11px;background:#2d3440"></div>
<div class="a" style="left:276px;top:125px;width:1px;height:5px;background:#8a9098"></div>
<div class="t" style="left:279px;top:125px;color:#e8eaee;font-size:5.6px;letter-spacing:-0.1px">EIGENSCHAFTSMANAGER</div>
<div class="a" style="left:273px;top:134px;width:186px;height:11px;background:#394250"></div>
<div class="t" style="left:276.5px;top:137px;color:#eceef2;letter-spacing:-0.32px">MN: EL-SC-PLC-16CH-L-002 (A40) (8:08 [240,225])</div>
<div class="t" style="left:453px;top:137px;color:#6a7078;font-size:4px">▾</div>
<div class="a" style="left:274px;top:147.5px;width:14px;height:12.5px;background:#2b7bd0"></div>
<svg style="left:274px;top:147.5px" width="14" height="13"><rect x="3" y="3.5" width="2" height="2" fill="#fff"/><rect x="3" y="7.5" width="2" height="2" fill="#fff"/><rect x="6" y="3.8" width="5" height="1.4" fill="#fff"/><rect x="6" y="7.8" width="5" height="1.4" fill="#fff"/></svg>
<div class="t" style="left:292px;top:151px;color:#e6e8ec">A-Z</div>
<div class="a" style="left:306px;top:148px;width:152px;height:11px;background:#535d6e"></div>
<div class="a" style="left:272px;top:162px;width:10px;height:304px;background:#363e4b"></div>
<div class="a" style="left:282px;top:162.2px;width:171px;height:1px;background:#363d4b"></div>
<div class="a" style="left:288.0px;top:167.7px;width:4px;height:0.8px;background:#8a8e96"></div>
<div class="t" style="left:297.5px;top:165.6px;color:#e8eaee;">Produkt</div>
<div class="a" style="left:353px;top:164.0px;width:85px;height:8.6px;background:#535d6e"></div>
<svg style="left:440.5px;top:163.8px" width="9" height="9"><circle cx="5.2" cy="3.6" r="2.4" fill="none" stroke="#a8acb2" stroke-width="0.9"/><path d="M3.6 5.2l-2.6 2.6" stroke="#a8acb2" stroke-width="1.1"/></svg>
<div class="a" style="left:282px;top:173.9px;width:171px;height:1px;background:#363d4b"></div>
<div class="t" style="left:297.5px;top:177.3px;color:#e8eaee;">Geerbt von</div>
<div class="a" style="left:353px;top:175.7px;width:98.5px;height:8.6px;background:#535d6e"></div>
<div class="t" style="left:354.5px;top:177.3px;color:#8e959e">-A40</div>
<div class="a" style="left:282px;top:185.6px;width:171px;height:1px;background:#363d4b"></div>
<div class="t" style="left:285.5px;top:189.0px;color:#e8eaee;">Baugruppe</div>
<div class="a" style="left:353px;top:187.4px;width:85px;height:8.6px;background:#535d6e"></div>
<div class="t" style="left:354.5px;top:189.0px;color:#eef0f2">EL-AS-PLC-16IO-L-001</div>
<svg style="left:440.5px;top:187.2px" width="9" height="9"><circle cx="5.2" cy="3.6" r="2.4" fill="none" stroke="#a8acb2" stroke-width="0.9"/><path d="M3.6 5.2l-2.6 2.6" stroke="#a8acb2" stroke-width="1.1"/></svg>
<div class="a" style="left:282px;top:197.4px;width:171px;height:1px;background:#363d4b"></div>
<div class="t" style="left:285.5px;top:200.7px;color:#e8eaee;">Einfrieren</div>
<div class="a" style="left:282px;top:209.1px;width:171px;height:1px;background:#363d4b"></div>
<div class="t" style="left:285.5px;top:212.4px;color:#e8eaee;">Peer-Beziehung</div>
<div class="t" style="left:353.5px;top:211.7px;color:#f0f0f0;font-size:6px">✔</div>
<div class="a" style="left:282px;top:220.8px;width:171px;height:1px;background:#363d4b"></div>
<div class="t" style="left:285.5px;top:224.2px;color:#e8eaee;">Kontrollierend</div>
<div class="t" style="left:353.5px;top:223.5px;color:#f0f0f0;font-size:6px">✔</div>
<div class="a" style="left:282px;top:232.5px;width:171px;height:1px;background:#363d4b"></div>
<div class="t" style="left:285.5px;top:235.9px;color:#e8eaee;">Layoutsymbol</div>
<div class="a" style="left:353.5px;top:235.4px;width:6px;height:6px;background:#1f2530"></div>
<div class="a" style="left:282px;top:244.2px;width:171px;height:1px;background:#363d4b"></div>
<div class="t" style="left:285.5px;top:247.6px;color:#e8eaee;">Katalog</div>
<div class="a" style="left:353px;top:246.0px;width:98.5px;height:8.6px;background:#535d6e"></div>
<div class="t" style="left:354.5px;top:247.6px;color:#8e959e">ELEKTROTECHNIK</div>
<div class="a" style="left:282px;top:256.0px;width:171px;height:1px;background:#363d4b"></div>
<div class="t" style="left:285.5px;top:259.3px;color:#e8eaee;">RKZ anzeigen</div>
<div class="t" style="left:353.5px;top:258.6px;color:#f0f0f0;font-size:6px">✔</div>
<div class="a" style="left:272px;top:267.7px;width:181px;height:11.72px;background:#3b4454"></div>
<div class="a" style="left:282px;top:267.7px;width:171px;height:1px;background:#363d4b"></div>
<div class="t" style="left:277px;top:271.7px;color:#7a8088;font-size:3.5px">◢</div>
<div class="t" style="left:284px;top:271.0px;color:#e8eaee;font-weight:bold;">Produkteigenschaften</div>
<div class="a" style="left:282px;top:279.4px;width:171px;height:1px;background:#363d4b"></div>
<div class="a" style="left:289.0px;top:284.3px;width:2px;height:2px;border-radius:1px;background:#5a6068"></div>
<div class="t" style="left:297.5px;top:282.8px;color:#e8eaee;">Typ</div>
<div class="a" style="left:353px;top:281.2px;width:85px;height:8.6px;background:#535d6e"></div>
<svg style="left:440.5px;top:281.0px" width="9" height="9"><circle cx="5.2" cy="3.6" r="2.4" fill="none" stroke="#a8acb2" stroke-width="0.9"/><path d="M3.6 5.2l-2.6 2.6" stroke="#a8acb2" stroke-width="1.1"/></svg>
<div class="a" style="left:272px;top:291.1px;width:181px;height:11.72px;background:#3b4454"></div>
<div class="a" style="left:282px;top:291.1px;width:171px;height:1px;background:#363d4b"></div>
<div class="t" style="left:277px;top:295.2px;color:#7a8088;font-size:3.5px">◢</div>
<div class="t" style="left:284px;top:294.5px;color:#e8eaee;font-weight:bold;">Übergeordnete Produkteigenschaften</div>
<div class="a" style="left:282px;top:302.8px;width:171px;height:1px;background:#363d4b"></div>
<div class="t" style="left:285.5px;top:306.2px;color:#e8eaee;">Menge</div>
<div class="a" style="left:353px;top:304.6px;width:98.5px;height:8.6px;background:#535d6e"></div>
<div class="t" style="left:354.5px;top:306.2px;color:#eef0f2">1</div>
<div class="a" style="left:282px;top:314.6px;width:171px;height:1px;background:#363d4b"></div>
<div class="t" style="left:285.5px;top:317.9px;color:#e8eaee;">Einheit</div>
<div class="a" style="left:353px;top:316.4px;width:85px;height:8.6px;background:#535d6e"></div>
<div class="t" style="left:354.5px;top:317.9px;color:#eef0f2">Stk.</div>
<svg style="left:440.5px;top:316.2px" width="9" height="9"><circle cx="5.2" cy="3.6" r="2.4" fill="none" stroke="#a8acb2" stroke-width="0.9"/><path d="M3.6 5.2l-2.6 2.6" stroke="#a8acb2" stroke-width="1.1"/></svg>
<div class="a" style="left:282px;top:326.3px;width:171px;height:1px;background:#363d4b"></div>
<div class="a" style="left:289.0px;top:331.1px;width:2px;height:2px;border-radius:1px;background:#5a6068"></div>
<div class="t" style="left:297.5px;top:329.6px;color:#e8eaee;">Artikelnummer</div>
<div class="a" style="left:353px;top:328.1px;width:85px;height:8.6px;background:#535d6e"></div>
<div class="t" style="left:354.5px;top:329.6px;color:#eef0f2">MoM.MT.6ES7323-1BH01-0AA0</div>
<svg style="left:440.5px;top:327.9px" width="9" height="9"><circle cx="5.2" cy="3.6" r="2.4" fill="none" stroke="#a8acb2" stroke-width="0.9"/><path d="M3.6 5.2l-2.6 2.6" stroke="#a8acb2" stroke-width="1.1"/></svg>
<div class="a" style="left:282px;top:338.0px;width:171px;height:1px;background:#363d4b"></div>
<div class="a" style="left:289.0px;top:342.9px;width:2px;height:2px;border-radius:1px;background:#5a6068"></div>
<div class="t" style="left:297.5px;top:341.4px;color:#e8eaee;">Typ</div>
<div class="a" style="left:353px;top:339.8px;width:85px;height:8.6px;background:#535d6e"></div>
<div class="t" style="left:354.5px;top:341.4px;color:#eef0f2">SIMATIC S7-300</div>
<svg style="left:440.5px;top:339.6px" width="9" height="9"><circle cx="5.2" cy="3.6" r="2.4" fill="none" stroke="#a8acb2" stroke-width="0.9"/><path d="M3.6 5.2l-2.6 2.6" stroke="#a8acb2" stroke-width="1.1"/></svg>
<div class="a" style="left:282px;top:349.7px;width:171px;height:1px;background:#363d4b"></div>
<div class="a" style="left:289.0px;top:354.6px;width:2px;height:2px;border-radius:1px;background:#5a6068"></div>
<div class="t" style="left:297.5px;top:353.1px;color:#e8eaee;">Modul</div>
<div class="a" style="left:353px;top:351.5px;width:85px;height:8.6px;background:#535d6e"></div>
<div class="t" style="left:354.5px;top:353.1px;color:#eef0f2">SM 323</div>
<svg style="left:440.5px;top:351.3px" width="9" height="9"><circle cx="5.2" cy="3.6" r="2.4" fill="none" stroke="#a8acb2" stroke-width="0.9"/><path d="M3.6 5.2l-2.6 2.6" stroke="#a8acb2" stroke-width="1.1"/></svg>
<div class="a" style="left:282px;top:361.4px;width:171px;height:1px;background:#363d4b"></div>
<div class="a" style="left:289.0px;top:366.3px;width:2px;height:2px;border-radius:1px;background:#5a6068"></div>
<div class="t" style="left:297.5px;top:364.8px;color:#e8eaee;">SPS-Typ</div>
<div class="a" style="left:353px;top:363.2px;width:85px;height:8.6px;background:#535d6e"></div>
<div class="t" style="left:354.5px;top:364.8px;color:#eef0f2">DI8/DO8</div>
<svg style="left:440.5px;top:363.0px" width="9" height="9"><circle cx="5.2" cy="3.6" r="2.4" fill="none" stroke="#a8acb2" stroke-width="0.9"/><path d="M3.6 5.2l-2.6 2.6" stroke="#a8acb2" stroke-width="1.1"/></svg>
<div class="a" style="left:282px;top:373.2px;width:171px;height:1px;background:#363d4b"></div>
<div class="t" style="left:285.5px;top:376.5px;color:#e8eaee;">Verlustleistung (W) [Pv]</div>
<div class="a" style="left:353px;top:375.0px;width:85px;height:8.6px;background:#535d6e"></div>
<div class="t" style="left:354.5px;top:376.5px;color:#eef0f2">6.5</div>
<svg style="left:440.5px;top:374.8px" width="9" height="9"><circle cx="5.2" cy="3.6" r="2.4" fill="none" stroke="#a8acb2" stroke-width="0.9"/><path d="M3.6 5.2l-2.6 2.6" stroke="#a8acb2" stroke-width="1.1"/></svg>
<div class="a" style="left:272px;top:384.9px;width:181px;height:11.72px;background:#3b4454"></div>
<div class="a" style="left:282px;top:384.9px;width:171px;height:1px;background:#363d4b"></div>
<div class="t" style="left:277px;top:388.9px;color:#7a8088;font-size:3.5px">◢</div>
<div class="t" style="left:284px;top:388.2px;color:#e8eaee;font-weight:bold;">E/A Adressen</div>
<div class="a" style="left:282px;top:396.6px;width:171px;height:1px;background:#363d4b"></div>
<div class="t" style="left:285.5px;top:400.0px;color:#e8eaee;">Automatische Nummerierun ✔</div>
<div class="a" style="left:282px;top:408.3px;width:171px;height:1px;background:#363d4b"></div>
<div class="a" style="left:288.0px;top:413.8px;width:4px;height:0.8px;background:#8a8e96"></div>
<div class="t" style="left:297.5px;top:411.7px;color:#e8eaee;">1</div>
<div class="a" style="left:353px;top:410.1px;width:98.5px;height:8.6px;background:#535d6e"></div>
<div class="t" style="left:354.5px;top:411.7px;color:#eef0f2">DI_01.00</div>
<div class="a" style="left:282px;top:420.0px;width:171px;height:1px;background:#363d4b"></div>
<div class="a" style="left:300.0px;top:424.9px;width:2px;height:2px;border-radius:1px;background:#5a6068"></div>
<div class="t" style="left:308.5px;top:423.4px;color:#e8eaee;">Adresse</div>
<div class="a" style="left:353px;top:421.8px;width:85px;height:8.6px;background:#535d6e"></div>
<div class="t" style="left:354.5px;top:423.4px;color:#eef0f2">DI_01.00</div>
<svg style="left:440.5px;top:421.6px" width="9" height="9"><circle cx="5.2" cy="3.6" r="2.4" fill="none" stroke="#a8acb2" stroke-width="0.9"/><path d="M3.6 5.2l-2.6 2.6" stroke="#a8acb2" stroke-width="1.1"/></svg>
<div class="a" style="left:282px;top:431.8px;width:171px;height:1px;background:#363d4b"></div>
<div class="a" style="left:300.0px;top:436.6px;width:2px;height:2px;border-radius:1px;background:#5a6068"></div>
<div class="t" style="left:308.5px;top:435.1px;color:#e8eaee;">SPS Funktionstext</div>
<div class="a" style="left:353px;top:433.6px;width:85px;height:8.6px;background:#535d6e"></div>
<div class="t" style="left:354.5px;top:435.1px;color:#eef0f2">24V DC Fehler</div>
<svg style="left:440.5px;top:433.4px" width="9" height="9"><circle cx="5.2" cy="3.6" r="2.4" fill="none" stroke="#a8acb2" stroke-width="0.9"/><path d="M3.6 5.2l-2.6 2.6" stroke="#a8acb2" stroke-width="1.1"/></svg>
<div class="a" style="left:282px;top:443.5px;width:171px;height:1px;background:#363d4b"></div>
<div class="t" style="left:297.5px;top:446.8px;color:#e8eaee;">SPS Langtext</div>
<div class="a" style="left:353px;top:445.3px;width:85px;height:8.6px;background:#535d6e"></div>
<div class="t" style="left:354.5px;top:446.8px;color:#eef0f2">-</div>
<svg style="left:440.5px;top:445.1px" width="9" height="9"><circle cx="5.2" cy="3.6" r="2.4" fill="none" stroke="#a8acb2" stroke-width="0.9"/><path d="M3.6 5.2l-2.6 2.6" stroke="#a8acb2" stroke-width="1.1"/></svg>
<div class="a" style="left:282px;top:455.2px;width:171px;height:1px;background:#363d4b"></div>
<div class="t" style="left:297.5px;top:458.6px;color:#e8eaee;">SPS Referenztext</div>
<div class="a" style="left:353px;top:457.0px;width:85px;height:8.6px;background:#535d6e"></div>
<div class="t" style="left:354.5px;top:458.6px;color:#eef0f2">-</div>
<svg style="left:440.5px;top:456.8px" width="9" height="9"><circle cx="5.2" cy="3.6" r="2.4" fill="none" stroke="#a8acb2" stroke-width="0.9"/><path d="M3.6 5.2l-2.6 2.6" stroke="#a8acb2" stroke-width="1.1"/></svg>
<div class="a" style="left:282px;top:466.9px;width:171px;height:1px;background:#363d4b"></div>
<div class="t" style="left:276px;top:472px;color:#e8eaee;font-weight:bold">1</div>
<div class="a" style="left:453.5px;top:162px;width:7px;height:305px;background:#262c37"></div>
<div class="a" style="left:454.8px;top:184.5px;width:4.4px;height:138px;background:#6c7076"></div>
<div class="t" style="left:454.5px;top:164px;color:#9a9ea4;font-size:4px">▴</div>
<div class="t" style="left:454.5px;top:461px;color:#9a9ea4;font-size:4px">▾</div>
<div class="a" style="left:261px;top:121px;width:11px;height:393px;background:#343b48"></div>
<div class="a" style="left:262px;top:140px;width:9px;height:46px;background:#3b4454"></div>
<div class="t" style="left:263px;top:185px;color:#dfe2e6;transform:rotate(-90deg);transform-origin:0 0;letter-spacing:-0.05px">Projektmanager</div>
<div class="a" style="left:262px;top:190px;width:9px;height:57px;background:#2c333f"></div>
<div class="t" style="left:263px;top:244px;color:#c8ccd2;transform:rotate(-90deg);transform-origin:0 0;letter-spacing:-0.05px">Katalogmanager</div>
<div class="a" style="left:461px;top:122px;width:499px;height:392px;background:#dadada;overflow:hidden">
<svg style="left:-461px;top:-122px" width="1024" height="568" font-family="Liberation Sans"><rect x="464" y="143.6" width="492.5" height="349.6" fill="none" stroke="#8a8a8a" stroke-width="0.80"/>
<rect x="470.5" y="150.3" width="480.8" height="335.8" fill="none" stroke="#5a5a5a" stroke-width="1.20"/>
<path d="M531 143.6v6.7M531 486v7.2" stroke="#707070" stroke-width="1.00"/>
<path d="M591 143.6v6.7M591 486v7.2" stroke="#707070" stroke-width="1.00"/>
<path d="M651 143.6v6.7M651 486v7.2" stroke="#707070" stroke-width="1.00"/>
<path d="M711 143.6v6.7M711 486v7.2" stroke="#707070" stroke-width="1.00"/>
<path d="M771 143.6v6.7M771 486v7.2" stroke="#707070" stroke-width="1.00"/>
<path d="M831 143.6v6.7M831 486v7.2" stroke="#707070" stroke-width="1.00"/>
<path d="M891 143.6v6.7M891 486v7.2" stroke="#707070" stroke-width="1.00"/>
<path d="M501 144.5v2.5M501 487v2.5" stroke="#909090" stroke-width="0.50"/>
<text x="500.2" y="149" font-size="4" fill="#606060">1</text>
<text x="500.2" y="492.2" font-size="4" fill="#606060">1</text>
<path d="M561 144.5v2.5M561 487v2.5" stroke="#909090" stroke-width="0.50"/>
<text x="560.2" y="149" font-size="4" fill="#606060">2</text>
<text x="560.2" y="492.2" font-size="4" fill="#606060">2</text>
<path d="M621 144.5v2.5M621 487v2.5" stroke="#909090" stroke-width="0.50"/>
<text x="620.2" y="149" font-size="4" fill="#606060">3</text>
<text x="620.2" y="492.2" font-size="4" fill="#606060">3</text>
<path d="M681 144.5v2.5M681 487v2.5" stroke="#909090" stroke-width="0.50"/>
<text x="680.2" y="149" font-size="4" fill="#606060">4</text>
<text x="680.2" y="492.2" font-size="4" fill="#606060">4</text>
<path d="M741 144.5v2.5M741 487v2.5" stroke="#909090" stroke-width="0.50"/>
<text x="740.2" y="149" font-size="4" fill="#606060">5</text>
<text x="740.2" y="492.2" font-size="4" fill="#606060">5</text>
<path d="M801 144.5v2.5M801 487v2.5" stroke="#909090" stroke-width="0.50"/>
<text x="800.2" y="149" font-size="4" fill="#606060">6</text>
<text x="800.2" y="492.2" font-size="4" fill="#606060">6</text>
<path d="M861 144.5v2.5M861 487v2.5" stroke="#909090" stroke-width="0.50"/>
<text x="860.2" y="149" font-size="4" fill="#606060">7</text>
<text x="860.2" y="492.2" font-size="4" fill="#606060">7</text>
<path d="M921 144.5v2.5M921 487v2.5" stroke="#909090" stroke-width="0.50"/>
<text x="920.2" y="149" font-size="4" fill="#606060">8</text>
<text x="920.2" y="492.2" font-size="4" fill="#606060">8</text>
<path d="M464 202.4h6.5M951.3 202.4h5.2" stroke="#707070" stroke-width="1.00"/>
<path d="M464 254.9h6.5M951.3 254.9h5.2" stroke="#707070" stroke-width="1.00"/>
<path d="M464 307.4h6.5M951.3 307.4h5.2" stroke="#707070" stroke-width="1.00"/>
<path d="M464 359.8h6.5M951.3 359.8h5.2" stroke="#707070" stroke-width="1.00"/>
<path d="M464 412.2h6.5M951.3 412.2h5.2" stroke="#707070" stroke-width="1.00"/>
<text x="465.5" y="178.2" font-size="3.8" fill="#606060">A</text>
<text x="953" y="178.2" font-size="3.8" fill="#606060">A</text>
<text x="465.5" y="230.5" font-size="3.8" fill="#606060">B</text>
<text x="953" y="230.5" font-size="3.8" fill="#606060">B</text>
<text x="465.5" y="282.8" font-size="3.8" fill="#606060">C</text>
<text x="953" y="282.8" font-size="3.8" fill="#606060">C</text>
<text x="465.5" y="335.1" font-size="3.8" fill="#606060">D</text>
<text x="953" y="335.1" font-size="3.8" fill="#606060">D</text>
<text x="465.5" y="387.4" font-size="3.8" fill="#606060">E</text>
<text x="953" y="387.4" font-size="3.8" fill="#606060">E</text>
<text x="465.5" y="439.7" font-size="3.8" fill="#606060">F</text>
<text x="953" y="439.7" font-size="3.8" fill="#606060">F</text>
<path d="M504.5 175H916.5" stroke="#f0a050" stroke-width="1.30"/>
<path d="M504.5 180.6H916.5" stroke="#5a50c8" stroke-width="1.20"/>
<path d="M504.5 186.7H916.5" stroke="#60c040" stroke-width="1.20" stroke-dasharray="8 2 1.5 2"/>
<path d="M545.6 175V344q0 1.8 1.8 1.8H604.5" fill="none" stroke="#f0a050" stroke-width="1.20"/>
<path d="M551.6 180.6V355.6q0 1.8 1.8 1.8H604.5" fill="none" stroke="#5a50c8" stroke-width="1.20"/>
<path d="M557.4 186.7V367.8q0 1.8 1.8 1.8H604.5" fill="none" stroke="#60c040" stroke-width="1.20" stroke-dasharray="8 2 1.5 2"/>
<path d="M687.2 175V344.3q0 1.8 1.8 1.8H746.5M687.2 345V350.2q0 1.8 1.8 1.8H746.5" fill="none" stroke="#f0a050" stroke-width="1.20"/>
<path d="M693.6 180.6V356.1q0 1.8 1.8 1.8H746.5M693.6 357V362q0 1.8 1.8 1.8H746.5" fill="none" stroke="#5a50c8" stroke-width="1.20"/>
<path d="M699 186.7V368.2q0 1.8 1.8 1.8H746.5" fill="none" stroke="#60c040" stroke-width="1.20" stroke-dasharray="8 2 1.5 2"/>
<path d="M504.5 171.5v19" stroke="#303030" stroke-width="1.10"/>
<path d="M916.5 171.5v19" stroke="#303030" stroke-width="1.20"/>
<rect x="604.5" y="228.3" width="71.4" height="147" fill="none" stroke="#505050" stroke-width="1.20"/>
<rect x="746.3" y="224.9" width="84.7" height="152.9" fill="none" stroke="#505050" stroke-width="1.20"/>
<rect x="746.3" y="226" width="8.7" height="151.8" fill="none" stroke="#202020" stroke-width="1.30"/>
<path d="M746.3 228.5h8.7" stroke="#202020" stroke-width="0.8"/>
<path d="M746.3 234.2h8.7" stroke="#202020" stroke-width="0.8"/>
<path d="M746.3 240.0h8.7" stroke="#202020" stroke-width="0.8"/>
<path d="M746.3 245.7h8.7" stroke="#202020" stroke-width="0.8"/>
<path d="M746.3 251.4h8.7" stroke="#202020" stroke-width="0.8"/>
<path d="M746.3 257.1h8.7" stroke="#202020" stroke-width="0.8"/>
<path d="M746.3 262.9h8.7" stroke="#202020" stroke-width="0.8"/>
<path d="M746.3 268.6h8.7" stroke="#202020" stroke-width="0.8"/>
<path d="M746.3 274.3h8.7" stroke="#202020" stroke-width="0.8"/>
<path d="M746.3 280.1h8.7" stroke="#202020" stroke-width="0.8"/>
<path d="M746.3 285.8h8.7" stroke="#202020" stroke-width="0.8"/>
<path d="M746.3 291.5h8.7" stroke="#202020" stroke-width="0.8"/>
<path d="M746.3 297.3h8.7" stroke="#202020" stroke-width="0.8"/>
<path d="M746.3 303.0h8.7" stroke="#202020" stroke-width="0.8"/>
<path d="M746.3 308.7h8.7" stroke="#202020" stroke-width="0.8"/>
<path d="M746.3 314.4h8.7" stroke="#202020" stroke-width="0.8"/>
<path d="M746.3 320.2h8.7" stroke="#202020" stroke-width="0.8"/>
<path d="M746.3 325.9h8.7" stroke="#202020" stroke-width="0.8"/>
<path d="M746.3 331.6h8.7" stroke="#202020" stroke-width="0.8"/>
<path d="M746.3 337.4h8.7" stroke="#202020" stroke-width="0.8"/>
<path d="M746.3 343.1h8.7" stroke="#202020" stroke-width="0.8"/>
<path d="M746.3 348.8h8.7" stroke="#202020" stroke-width="0.8"/>
<path d="M746.3 354.6h8.7" stroke="#202020" stroke-width="0.8"/>
<path d="M746.3 360.3h8.7" stroke="#202020" stroke-width="0.8"/>
<path d="M746.3 366.0h8.7" stroke="#202020" stroke-width="0.8"/>
<path d="M746.3 371.8h8.7" stroke="#202020" stroke-width="0.8"/>
<rect x="857.7" y="227" width="48" height="148" fill="#3a3a3a" stroke="#262626" stroke-width="0.80"/>
<rect x="860.7" y="240.4" width="26.1" height="122.8" fill="#62a890"/>
<rect x="887.5" y="230" width="17" height="143" fill="#2e2e2e"/>
<rect x="858.7" y="303" width="3" height="10" fill="#2a2a2a"/>
<rect x="862" y="229" width="22" height="6" fill="none" stroke="#777" stroke-width="0.6"/>
<rect x="867" y="236" width="8" height="3.5" fill="#222"/>
<rect x="889" y="239.0" width="1.8" height="1.3" fill="#9a9a9a"/>
<rect x="889" y="308.0" width="1.8" height="1.3" fill="#9a9a9a"/>
<rect x="889" y="242.1" width="1.8" height="1.3" fill="#9a9a9a"/>
<rect x="889" y="311.1" width="1.8" height="1.3" fill="#9a9a9a"/>
<rect x="889" y="245.2" width="1.8" height="1.3" fill="#9a9a9a"/>
<rect x="889" y="314.2" width="1.8" height="1.3" fill="#9a9a9a"/>
<rect x="889" y="248.3" width="1.8" height="1.3" fill="#9a9a9a"/>
<rect x="889" y="317.3" width="1.8" height="1.3" fill="#9a9a9a"/>
<rect x="889" y="251.4" width="1.8" height="1.3" fill="#9a9a9a"/>
<rect x="889" y="320.4" width="1.8" height="1.3" fill="#9a9a9a"/>
<rect x="889" y="254.5" width="1.8" height="1.3" fill="#9a9a9a"/>
<rect x="889" y="323.5" width="1.8" height="1.3" fill="#9a9a9a"/>
<rect x="889" y="257.6" width="1.8" height="1.3" fill="#9a9a9a"/>
<rect x="889" y="326.6" width="1.8" height="1.3" fill="#9a9a9a"/>
<rect x="889" y="260.7" width="1.8" height="1.3" fill="#9a9a9a"/>
<rect x="889" y="329.7" width="1.8" height="1.3" fill="#9a9a9a"/>
<rect x="889" y="263.8" width="1.8" height="1.3" fill="#9a9a9a"/>
<rect x="889" y="332.8" width="1.8" height="1.3" fill="#9a9a9a"/>
<rect x="889" y="266.9" width="1.8" height="1.3" fill="#9a9a9a"/>
<rect x="889" y="335.9" width="1.8" height="1.3" fill="#9a9a9a"/>
<rect x="889" y="270.0" width="1.8" height="1.3" fill="#9a9a9a"/>
<rect x="889" y="339.0" width="1.8" height="1.3" fill="#9a9a9a"/>
<rect x="889" y="273.1" width="1.8" height="1.3" fill="#9a9a9a"/>
<rect x="889" y="342.1" width="1.8" height="1.3" fill="#9a9a9a"/>
<rect x="889" y="276.2" width="1.8" height="1.3" fill="#9a9a9a"/>
<rect x="889" y="345.2" width="1.8" height="1.3" fill="#9a9a9a"/>
<rect x="889" y="279.3" width="1.8" height="1.3" fill="#9a9a9a"/>
<rect x="889" y="348.3" width="1.8" height="1.3" fill="#9a9a9a"/>
<rect x="889" y="282.4" width="1.8" height="1.3" fill="#9a9a9a"/>
<rect x="889" y="351.4" width="1.8" height="1.3" fill="#9a9a9a"/>
<rect x="889" y="285.5" width="1.8" height="1.3" fill="#9a9a9a"/>
<rect x="889" y="354.5" width="1.8" height="1.3" fill="#9a9a9a"/>
<rect x="889" y="288.6" width="1.8" height="1.3" fill="#9a9a9a"/>
<rect x="889" y="357.6" width="1.8" height="1.3" fill="#9a9a9a"/>
<rect x="889" y="291.7" width="1.8" height="1.3" fill="#9a9a9a"/>
<rect x="889" y="360.7" width="1.8" height="1.3" fill="#9a9a9a"/>
<rect x="862" y="365" width="5" height="6" fill="#555"/>
<rect x="470.5" y="465" width="480.8" height="21.1" fill="none" stroke="#555" stroke-width="1.00"/>
<path d="M508.9 465v21.1" stroke="#666" stroke-width="0.80"/>
<path d="M532.4 465v21.1" stroke="#666" stroke-width="0.80"/>
<path d="M556.5 465v21.1" stroke="#666" stroke-width="0.80"/>
<path d="M579.8 465v21.1" stroke="#666" stroke-width="0.80"/>
<path d="M603 465v21.1" stroke="#666" stroke-width="0.80"/>
<path d="M627.1 465v21.1" stroke="#666" stroke-width="0.80"/>
<path d="M674.5 465v21.1" stroke="#666" stroke-width="0.80"/>
<path d="M708.8 465v21.1" stroke="#666" stroke-width="0.80"/>
<path d="M762.4 465v21.1" stroke="#666" stroke-width="0.80"/>
<path d="M814.3 465v21.1" stroke="#666" stroke-width="0.80"/>
<path d="M855.6 465v21.1" stroke="#666" stroke-width="0.80"/>
<path d="M897.4 465v21.1" stroke="#666" stroke-width="0.80"/>
<path d="M470.5 470.3h38.4M508.9 475.7h118.2M627.1 475.7h47.4M674.5 480.8h88M814.3 475.7h83.1M897.4 470.3h54M897.4 475.7h54" stroke="#777" stroke-width="0.60"/>
<path d="M915.3 475.7v10.4M932.9 475.7v10.4" stroke="#888" stroke-width="0.50"/>
<text x="494" y="176.3" font-size="4.4" fill="#222" letter-spacing="-0.15">/07.8</text>
<text x="494" y="181.9" font-size="4.4" fill="#222" letter-spacing="-0.15">/06.8</text>
<text x="494" y="188.0" font-size="4.4" fill="#222" letter-spacing="-0.15">/04.8</text>
<text x="506" y="173.3" font-size="3" fill="#505050">24V</text>
<text x="506" y="179" font-size="3" fill="#505050">0V</text>
<text x="506" y="185" font-size="3" fill="#505050">PE</text>
<text x="515.5" y="174" font-size="4.6" fill="#e05a5a">128 - BK</text>
<text x="516" y="179.6" font-size="4.6" fill="#e05a5a">128 - BU</text>
<text x="516" y="185.6" font-size="4.6" fill="#e05a5a">99 - GNYE</text>
<text x="609" y="173" font-size="4.6" fill="#e05a5a">131 - BK</text>
<text x="614.6" y="179" font-size="4.6" fill="#e05a5a">132 - BU</text>
<text x="617.5" y="185" font-size="4.6" fill="#e05a5a">136 - GNYE</text>
<text x="908" y="173.5" font-size="3" fill="#505050">24V</text>
<text x="908" y="179.3" font-size="3" fill="#505050">0V</text>
<text x="908" y="185.3" font-size="3" fill="#505050">PE</text>
<text x="918.5" y="176.3" font-size="3.8" fill="#404040">/10.1</text>
<text x="918.5" y="182" font-size="3.8" fill="#404040">/08.1</text>
<text x="918.5" y="188" font-size="3.8" fill="#404040">/10.1</text>
<text x="604" y="222.3" font-size="4.6" fill="#2a2a2a">-A30</text>
<text x="640.5" y="347.8" font-size="4.2" fill="#303030">SIMATIC S7-300</text>
<text x="654.5" y="365.3" font-size="4.2" fill="#303030">CPU 314</text>
<text x="598" y="345.6" font-size="3" fill="#404040">L+</text>
<text x="598" y="357" font-size="3" fill="#404040">0V</text>
<text x="598" y="369" font-size="3" fill="#404040">PE</text>
<text x="745" y="221.5" font-size="4.2" fill="#2a2a2a">-A40</text>
<text x="734.5" y="231.6" font-size="3.9" fill="#2a2a2a">/08.1</text>
<text x="756.5" y="231.6" font-size="3.9" fill="#2a2a2a">DI_01.00</text>
<text x="777.5" y="231.6" font-size="3.9" fill="#2a2a2a">24V DC Fehler</text>
<text x="734.5" y="237.3" font-size="3.9" fill="#2a2a2a">/08.1</text>
<text x="756.5" y="237.3" font-size="3.9" fill="#2a2a2a">DI_01.01</text>
<text x="777.5" y="237.3" font-size="3.9" fill="#2a2a2a">24V DC OK</text>
<text x="734.5" y="243.1" font-size="3.9" fill="#2a2a2a">/08.2</text>
<text x="756.5" y="243.1" font-size="3.9" fill="#2a2a2a">DI_01.02</text>
<text x="777.5" y="243.1" font-size="3.9" fill="#2a2a2a">Not-Halt</text>
<text x="734.5" y="248.8" font-size="3.9" fill="#2a2a2a">/08.3</text>
<text x="756.5" y="248.8" font-size="3.9" fill="#2a2a2a">DI_01.03</text>
<text x="777.5" y="248.8" font-size="3.9" fill="#2a2a2a">Zylinder MB01 ausgefahren</text>
<text x="734.5" y="254.5" font-size="3.9" fill="#2a2a2a">/08.3</text>
<text x="756.5" y="254.5" font-size="3.9" fill="#2a2a2a">DI_01.04</text>
<text x="777.5" y="254.5" font-size="3.9" fill="#2a2a2a">Zylinder MB01 eingefahren</text>
<text x="734.5" y="260.2" font-size="3.9" fill="#2a2a2a">/08.4</text>
<text x="756.5" y="260.2" font-size="3.9" fill="#2a2a2a">DI_01.05</text>
<text x="777.5" y="260.2" font-size="3.9" fill="#2a2a2a">Zylinder MB02 ausgefahren</text>
<text x="734.5" y="266.0" font-size="3.9" fill="#2a2a2a">/08.4</text>
<text x="756.5" y="266.0" font-size="3.9" fill="#2a2a2a">DI_01.06</text>
<text x="777.5" y="266.0" font-size="3.9" fill="#2a2a2a">Zylinder MB02 eingefahren</text>
<text x="734.5" y="271.7" font-size="3.9" fill="#2a2a2a">/08.5</text>
<text x="756.5" y="271.7" font-size="3.9" fill="#2a2a2a">DI_01.07</text>
<text x="777.5" y="271.7" font-size="3.9" fill="#2a2a2a">Reserve</text>
<text x="734.5" y="277.4" font-size="3.9" fill="#2a2a2a">/08.1</text>
<text x="756.5" y="277.4" font-size="3.9" fill="#2a2a2a">DO_01.00</text>
<text x="777.5" y="277.4" font-size="3.9" fill="#2a2a2a">Reset Relais</text>
<text x="734.5" y="283.2" font-size="3.9" fill="#2a2a2a">/08.2</text>
<text x="756.5" y="283.2" font-size="3.9" fill="#2a2a2a">DO_01.01</text>
<text x="777.5" y="283.2" font-size="3.9" fill="#2a2a2a">Reset 24V DC</text>
<text x="734.5" y="288.9" font-size="3.9" fill="#2a2a2a">/08.3</text>
<text x="756.5" y="288.9" font-size="3.9" fill="#2a2a2a">DO_01.02</text>
<text x="777.5" y="288.9" font-size="3.9" fill="#2a2a2a">Relais Magnetventil MB01</text>
<text x="734.5" y="294.6" font-size="3.9" fill="#2a2a2a">/08.4</text>
<text x="756.5" y="294.6" font-size="3.9" fill="#2a2a2a">DO_01.03</text>
<text x="777.5" y="294.6" font-size="3.9" fill="#2a2a2a">Relais Magnetventil MB02</text>
<text x="734.5" y="300.4" font-size="3.9" fill="#2a2a2a">/08.5</text>
<text x="756.5" y="300.4" font-size="3.9" fill="#2a2a2a">DO_01.04</text>
<text x="777.5" y="300.4" font-size="3.9" fill="#2a2a2a">Relais Betrieb</text>
<text x="734.5" y="306.1" font-size="3.9" fill="#2a2a2a">/08.6</text>
<text x="756.5" y="306.1" font-size="3.9" fill="#2a2a2a">DO_01.05</text>
<text x="777.5" y="306.1" font-size="3.9" fill="#2a2a2a">Relais Sammelstörung</text>
<text x="734.5" y="311.8" font-size="3.9" fill="#2a2a2a">/08.7</text>
<text x="756.5" y="311.8" font-size="3.9" fill="#2a2a2a">DO_01.06</text>
<text x="777.5" y="311.8" font-size="3.9" fill="#2a2a2a">Reserve Relais VRH</text>
<text x="734.5" y="317.6" font-size="3.9" fill="#2a2a2a">/08.8</text>
<text x="756.5" y="317.6" font-size="3.9" fill="#2a2a2a">DO_01.07</text>
<text x="777.5" y="317.6" font-size="3.9" fill="#2a2a2a">Reserve</text>
<text x="756.5" y="347.3" font-size="3.9" fill="#2a2a2a">L1+</text>
<text x="756.5" y="353.2" font-size="3.9" fill="#2a2a2a">L2+</text>
<text x="756.5" y="359" font-size="3.9" fill="#2a2a2a">0V1</text>
<text x="756.5" y="365" font-size="3.9" fill="#2a2a2a">0V2</text>
<text x="756.5" y="371" font-size="3.9" fill="#2a2a2a">PE</text>
<rect x="747.5" y="367" width="6.3" height="9.8" fill="#202020"/>
<text x="811" y="354" font-size="3.9" fill="#2a2a2a">DI8/DO8</text>
<text x="815.5" y="360" font-size="3.9" fill="#2a2a2a">SM 323</text>
<text x="717.5" y="344" font-size="4.6" fill="#e05a5a">129 - BK</text>
<text x="717.5" y="350" font-size="4.6" fill="#e05a5a">130 - BK</text>
<text x="717.5" y="356" font-size="4.6" fill="#e05a5a">134 - BU</text>
<text x="717.5" y="362" font-size="4.6" fill="#e05a5a">133 - BU</text>
<text x="713.5" y="368" font-size="4.6" fill="#e05a5a">135 - GNYE</text>
<text x="471.5" y="469.6" font-size="3.4" fill="#1e1e1e" letter-spacing="-0.1">Bm.</text>
<text x="471.5" y="474.8" font-size="3.4" fill="#1e1e1e" letter-spacing="-0.1">Bm. Bräbildung</text>
<text x="510" y="469.8" font-size="3.4" fill="#1e1e1e" letter-spacing="-0.1">Bm. Datum</text>
<text x="510" y="480.8" font-size="3.4" fill="#1e1e1e" letter-spacing="-0.1">Bm. Bearbeiter</text>
<text x="533.5" y="469.8" font-size="3.4" fill="#1e1e1e" letter-spacing="-0.1">Freigegeben am</text>
<text x="533.5" y="480.8" font-size="3.4" fill="#1e1e1e" letter-spacing="-0.1">Freigegeben von</text>
<text x="557.5" y="469.8" font-size="3.4" fill="#1e1e1e" letter-spacing="-0.1">Abgeprüft am</text>
<text x="557.5" y="480.8" font-size="3.4" fill="#1e1e1e" letter-spacing="-0.1">Geändert von</text>
<text x="581" y="469.8" font-size="3.4" fill="#1e1e1e" letter-spacing="-0.1">Geprüft am</text>
<text x="581" y="480.8" font-size="3.4" fill="#1e1e1e" letter-spacing="-0.1">Geprüft von</text>
<text x="604" y="469.8" font-size="3.4" fill="#1e1e1e" letter-spacing="-0.1">Erstellt am</text>
<text x="604" y="480.8" font-size="3.4" fill="#1e1e1e" letter-spacing="-0.1">Erstellt von</text>
<text x="628" y="469.8" font-size="3.4" fill="#1e1e1e" letter-spacing="-0.1">Projektbezeichnung</text>
<text x="628" y="480.8" font-size="3.4" fill="#1e1e1e" letter-spacing="-0.1">Projektverantwortlicher</text>
<text x="815.5" y="469.8" font-size="3.4" fill="#1e1e1e" letter-spacing="-0.1">Dokumentinhalt</text>
<text x="815.5" y="480.8" font-size="3.4" fill="#1e1e1e" letter-spacing="-0.1">Auftragsnummer</text>
<text x="857" y="469.8" font-size="3.4" fill="#1e1e1e" letter-spacing="-0.1">Dokumentersteller</text>
<text x="857" y="480.8" font-size="3.4" fill="#1e1e1e" letter-spacing="-0.1">Dokumentart</text>
<text x="899" y="480.8" font-size="3.4" fill="#1e1e1e" letter-spacing="-0.1">Blatt</text>
<text x="917" y="480.8" font-size="3.4" fill="#1e1e1e" letter-spacing="-0.1">Blatt</text>
<text x="604" y="474.8" font-size="3.4" fill="#8e8e8e" letter-spacing="-0.1">08.11.2021</text>
<text x="604" y="485.3" font-size="3.4" fill="#8e8e8e" letter-spacing="-0.1">Musterm.</text>
<text x="628" y="474.8" font-size="3.4" fill="#8e8e8e" letter-spacing="-0.1">Pump Control</text>
<text x="628" y="485.3" font-size="3.4" fill="#8e8e8e" letter-spacing="-0.1">Muster87</text>
<text x="710" y="469.8" font-size="3.4" fill="#8e8e8e" letter-spacing="-0.1">Kunde International GmbH</text>
<text x="710" y="474.8" font-size="3.4" fill="#8e8e8e" letter-spacing="-0.1">Dachstr. 22</text>
<text x="710" y="479.8" font-size="3.4" fill="#8e8e8e" letter-spacing="-0.1">D-70372 Düsseldorf</text>
<text x="763.5" y="469.8" font-size="3.4" fill="#8e8e8e" letter-spacing="-0.1">S7-300</text>
<text x="763.5" y="474.8" font-size="3.4" fill="#8e8e8e" letter-spacing="-0.1">SPS Eingänge/Ausgänge</text>
<text x="815.5" y="485.3" font-size="3.4" fill="#8e8e8e" letter-spacing="-0.1">2021-xxx-0071</text>
<text x="857" y="485.3" font-size="3.4" fill="#8e8e8e" letter-spacing="-0.1">Schema</text>
<text x="899" y="469.8" font-size="3.4" fill="#8e8e8e" letter-spacing="-0.1">=F01ET</text>
<text x="899" y="474.8" font-size="3.4" fill="#8e8e8e" letter-spacing="-0.1">+L01ET</text>
<text x="899" y="485.3" font-size="3.4" fill="#8e8e8e" letter-spacing="-0.1">08</text>
<text x="935" y="480.8" font-size="3.4" fill="#8e8e8e" letter-spacing="-0.1">10</text>
<text x="935" y="485.3" font-size="3.4" fill="#8e8e8e" letter-spacing="-0.1">10</text>
<text x="693" y="485" font-size="3" font-weight="bold" fill="#303030">Sheet No.</text></svg>
</div>
<svg style="left:928px;top:125px" width="32" height="10"><rect x="3" y="5" width="6" height="1.6" fill="none" stroke="#9a9a9a" stroke-width="0.7"/><rect x="13" y="2" width="6" height="6" fill="none" stroke="#9a9a9a" stroke-width="0.8"/><rect x="15" y="4" width="2" height="2" fill="#9a9a9a"/><rect x="23" y="2" width="6" height="6" fill="none" stroke="#9a9a9a" stroke-width="0.8"/><path d="M24 7l4 -4" stroke="#9a9a9a" stroke-width="0.6"/></svg>
<!-- navigator -->
<svg style="left:715px;top:170px" width="110" height="110">
<circle cx="54.8" cy="56" r="48.8" fill="#383838" fill-opacity="0.9"/>
<g fill="none" stroke="#9a9a9a" stroke-width="1">
<rect x="26.5" y="27.5" width="11" height="11"/><rect x="30.5" y="24.5" width="11" height="11" fill="#3e3e3e"/><path d="M33 28.5q3 -2 6 1M39 32q-3 2 -6 -1" stroke-width="0.8"/>
<rect x="17.5" y="48.5" width="10" height="10"/><rect x="21.5" y="45.5" width="10" height="10" fill="#3e3e3e"/><path d="M24 48l4 4" stroke-width="0.8"/>
<rect x="26.5" y="67.5" width="6" height="14"/><rect x="34.5" y="67.5" width="6" height="14"/>
<path d="M52 81v-4M52 71v-5M49 71h6v6h-6zM58 68v14M62 68v14" stroke="#b0b0b0"/>
<path d="M74 80l8 -12l5 10" stroke="#888"/>
</g>
<path d="M48 29l12 -12l2.5 2.5l-12 12z" fill="#8e8e8e"/><path d="M56 30l7 0l0 -5z" fill="#b0b0b0"/>
<path d="M56 82.5h6" stroke="#3a8ad8" stroke-width="1.6"/>
<path d="M37 76l0 6l1.8 -1.6l1.5 3l1.2 -0.6l-1.4 -3h2.6z" fill="#fff"/>
<circle cx="74.8" cy="78.5" r="3.6" fill="#2ab060"/><path d="M73.5 78.5l1.3 1.3l2 -2.3" stroke="#fff" stroke-width="0.8" fill="none"/>
</svg>
<div class="a" style="left:755.3px;top:162px;width:29px;height:11px;background:#1e2532"></div>
<div class="t" style="left:758px;top:165px;color:#f0f2f4;font-size:5.6px">Navigator</div>
<!-- command line -->
<div class="a" style="left:562px;top:501.6px;width:25px;height:11.8px;background:#5b6270"></div>
<div class="a" style="left:563.5px;top:503px;width:2px;height:9px;background:#8a909a"></div>
<svg style="left:566px;top:502px" width="22" height="11"><path d="M3 3l4 4M7 3l-4 4" stroke="#dde" stroke-width="0.9"/><path d="M12 9l5 -5M15.5 3.5q2 -1 2.5 1" stroke="#dde" stroke-width="1.1" fill="none"/></svg>
<div class="a" style="left:587px;top:501.6px;width:273.4px;height:11.8px;background:#f4f4f4"></div>
<svg style="left:589px;top:503px" width="14" height="9"><rect x="1.5" y="2" width="7" height="5" fill="none" stroke="#777" stroke-width="0.8"/><rect x="1.5" y="2" width="7" height="1.5" fill="#777"/><path d="M10 4h2.4l-1.2 1.4z" fill="#777"/></svg>
<div class="t" style="left:604px;top:504.8px;color:#a8a8a8;font-family:'Liberation Mono',monospace;font-style:italic;font-size:5.6px;letter-spacing:0.25px">Befehl eingeben</div>
<div class="t" style="left:855px;top:505px;color:#888;font-size:4px">▴</div>
<!-- bottom bar -->
<div class="a" style="left:64px;top:506px;width:208px;height:7.5px;background:#323946"></div>
<div class="a" style="left:272px;top:512px;width:189px;height:2px;background:#3f4655"></div>
<div class="a" style="left:64px;top:514px;width:896px;height:12.5px;background:#222935"></div>
<div class="a" style="left:71px;top:513.6px;width:24.7px;height:8.8px;background:#3a4252"></div>
<div class="a" style="left:99.2px;top:513.6px;width:25.8px;height:8.8px;background:#2b3240"></div>
<div class="a" style="left:129.6px;top:513.6px;width:27px;height:8.8px;background:#2b3240"></div>
<div class="t" style="left:74.5px;top:516.2px;color:#f4f4f4;font-weight:bold;font-size:5.8px">Modell</div>
<div class="t" style="left:102.7px;top:516.2px;color:#b8bcc4;font-size:5.8px">Layout1</div>
<div class="t" style="left:133.2px;top:516.2px;color:#b8bcc4;font-size:5.8px">Layout2</div>
<div class="t" style="left:163.5px;top:515.2px;color:#b8bcc4;font-size:6.5px">+</div>
<!-- status -->
<div class="a" style="left:711.4px;top:514px;width:56px;height:12px;background:#2e3644"></div>
<div class="t" style="left:713.3px;top:517.6px;color:#e4e6ea;font-size:6px;letter-spacing:-0.12px">260.03, 226.66, 0.00</div>
<svg style="left:768px;top:514px" width="192" height="12">
<rect x="3.5" y="2.5" width="7" height="7" fill="none" stroke="#8a9098" stroke-width="0.7"/><path d="M3.5 5h7M3.5 7.3h7M5.8 2.5v7M8.2 2.5v7" stroke="#8a9098" stroke-width="0.6"/>
<rect x="12.6" y="1.2" width="10" height="9.6" fill="#3a6aa8"/><path d="M15 1.5v9M17.6 1.5v9M20.2 1.5v9M12.8 3.8h9.6M12.8 6.1h9.6M12.8 8.4h9.6" stroke="#a8d0f8" stroke-width="0.6"/>
<path d="M25.5 5h3l-1.5 1.8z" fill="#c0c4ca"/>
<rect x="32.3" y="1.2" width="10" height="9.6" fill="#3a6aa8"/><rect x="34" y="3" width="6.5" height="6" fill="none" stroke="#80b0e8" stroke-width="0.6"/><path d="M34 9h6.5M34 3v6" stroke="#b8dcff" stroke-width="0.9"/>
<path d="M47 9.5h7M47 9.5l6 -6" stroke="#c0c4ca" stroke-width="0.8"/>
<rect x="58.5" y="3.5" width="7" height="6.5" fill="none" stroke="#aab" stroke-width="0.8"/><path d="M56.5 2v3M56.5 2h3" stroke="#aab" stroke-width="0.6"/>
<path d="M68 5h3l-1.5 1.8z" fill="#c0c4ca"/>
<path d="M77 3h7M77 6h7M77 9h7" stroke="#c8ccd2" stroke-width="1"/><path d="M75.5 3h1M75.5 6h1M75.5 9h1" stroke="#c8ccd2" stroke-width="1"/>
<circle cx="91.7" cy="6" r="2.8" fill="none" stroke="#f0f0f0" stroke-width="1.6"/>
<path d="M100.5 5h3l-1.5 1.8z" fill="#c0c4ca"/>
<rect x="109" y="2" width="4" height="3" fill="#9aa"/><rect x="114" y="6" width="5" height="4" fill="#9aa"/><path d="M109 9l4 -3" stroke="#9aa" stroke-width="0.7"/>
<circle cx="125.2" cy="6" r="4" fill="#8a8e94"/><circle cx="125.2" cy="6" r="2.5" fill="none" stroke="#5a5e64" stroke-width="0.8"/>
<path d="M134.5 1.5v9M137 1.5v9M139.5 1.5v9M142 1.5v9" stroke="#5a606a" stroke-width="0.8"/>
<rect x="146" y="2" width="5" height="4" fill="#3a70c0"/><rect x="145.5" y="6.5" width="4" height="3" fill="#e0b020"/><path d="M150 9l3 -3" stroke="#30c040" stroke-width="1.2"/>
<rect x="156" y="2" width="8" height="7" fill="#e8e8ea"/><rect x="158" y="4" width="4" height="1" fill="#888"/><circle cx="162.5" cy="9" r="1.8" fill="#e88a30"/>
<rect x="170" y="3" width="8" height="6" fill="none" stroke="#c0c4ca" stroke-width="0.8"/><path d="M172 7l4 -2" stroke="#c0c4ca" stroke-width="0.8"/>
<path d="M182 3h8M182 6h8M182 9h8" stroke="#e8eaee" stroke-width="1.1"/>
</svg>

</body></html>
